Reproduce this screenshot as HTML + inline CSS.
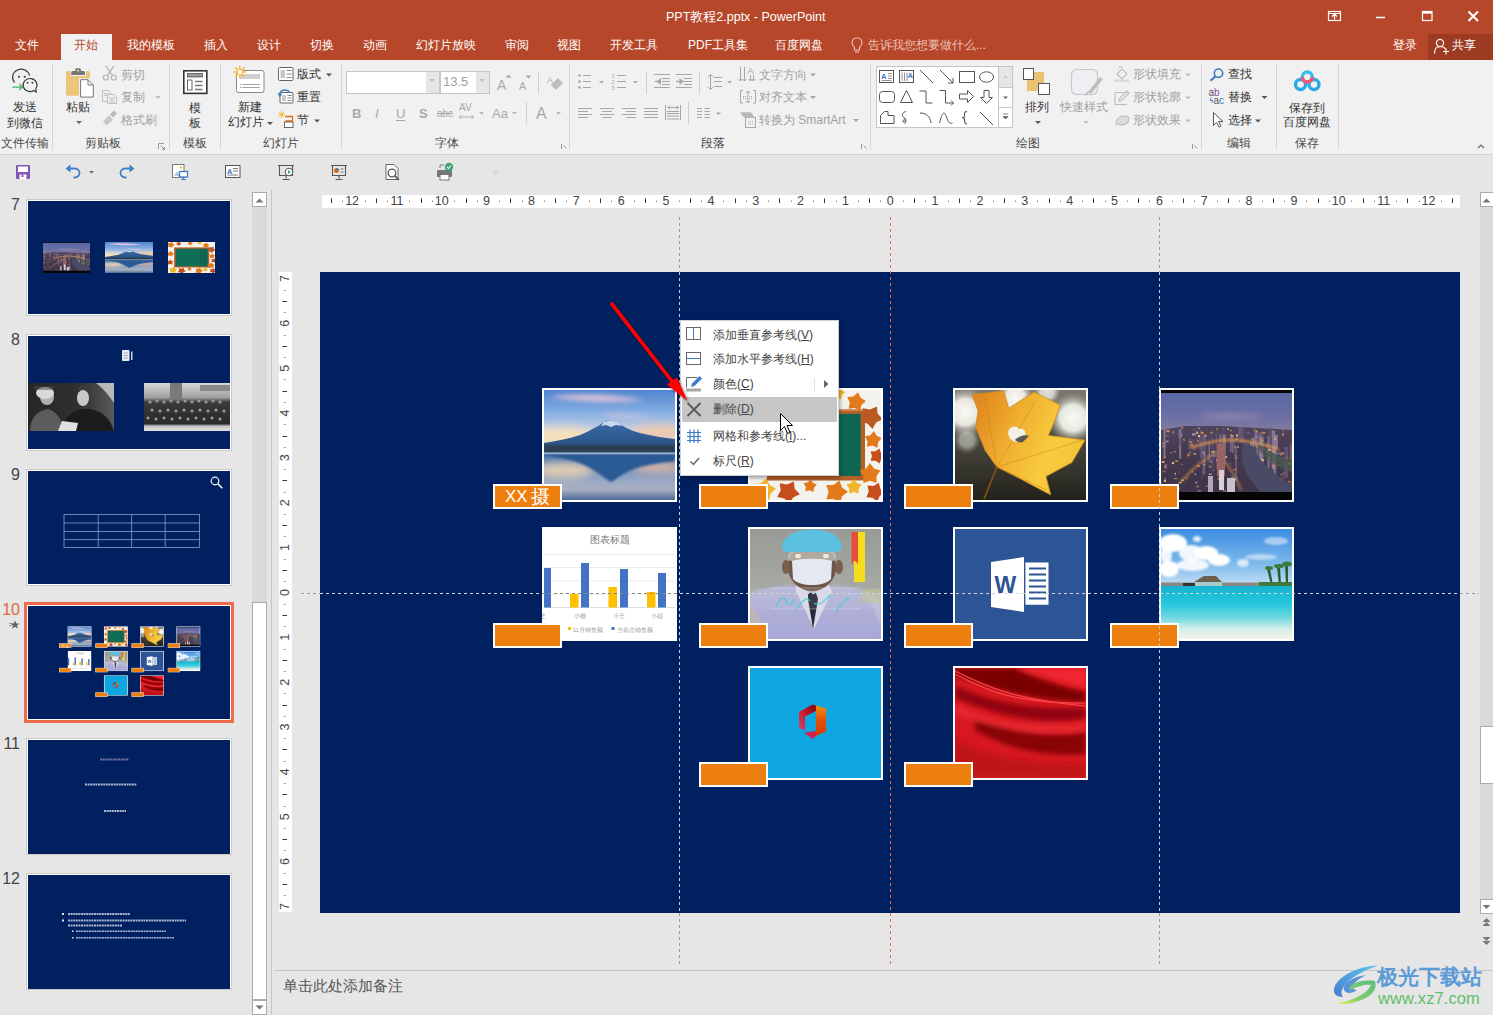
<!DOCTYPE html>
<html><head><meta charset="utf-8">
<style>
*{box-sizing:border-box}
html,body{margin:0;padding:0}
body{width:1493px;height:1015px;position:relative;overflow:hidden;background:#E6E6E6;font-family:"Liberation Sans",sans-serif;color:#333;font-size:12px}
.a{position:absolute}
.t{position:absolute;white-space:nowrap;line-height:16px;font-size:12px}
.tab{position:absolute;top:37px;line-height:16px;color:#fff;font-size:12px;white-space:nowrap}
.sep{position:absolute;top:64px;width:1px;height:86px;background:#D6D6D6}
.gl{position:absolute;top:135px;line-height:16px;color:#4A4A4A;font-size:12px;white-space:nowrap}
.dis{color:#A0A0A0}
.pic{position:absolute;width:135px;height:114px;border:2px solid #fff;overflow:hidden}
.lbl{position:absolute;width:69px;height:25px;border:2px solid #fff;background:#EE7F0E}
.thumb{position:absolute;left:26px;width:206px;height:117px;border:1px solid #C9C9C9;background:#002060;outline:none}
.thumb .in{position:absolute;left:1px;top:1px;right:1px;bottom:1px;background:#002060}
.tn{position:absolute;left:0;width:20px;text-align:right;font-size:16px;line-height:16px;color:#444}
</style></head><body>

<!-- ===== TITLE BAR ===== -->
<div class="a" style="left:0;top:0;width:1493px;height:60px;background:#B7472A"></div>
<div class="t" style="left:666px;top:9px;color:#fff;font-size:12.5px">PPT教程2.pptx - PowerPoint</div>

<!-- tabs -->
<div class="a" style="left:61px;top:34px;width:51px;height:26px;background:#F1F1F1"></div>
<div class="tab" style="left:15px">文件</div>
<div class="tab" style="left:74px;color:#B7472A">开始</div>
<div class="tab" style="left:127px">我的模板</div>
<div class="tab" style="left:204px">插入</div>
<div class="tab" style="left:257px">设计</div>
<div class="tab" style="left:310px">切换</div>
<div class="tab" style="left:363px">动画</div>
<div class="tab" style="left:416px">幻灯片放映</div>
<div class="tab" style="left:505px">审阅</div>
<div class="tab" style="left:557px">视图</div>
<div class="tab" style="left:610px">开发工具</div>
<div class="tab" style="left:688px">PDF工具集</div>
<div class="tab" style="left:775px">百度网盘</div>
<div class="tab" style="left:868px;color:#EBC3B6">告诉我您想要做什么...</div>
<div class="tab" style="left:1393px">登录</div>
<div class="a" style="left:1428px;top:34px;width:65px;height:26px;background:#9C3B22"></div>
<div class="tab" style="left:1452px">共享</div>

<!-- ===== RIBBON ===== -->
<div class="a" style="left:0;top:60px;width:1493px;height:95px;background:#F1F1F1;border-bottom:1px solid #D5D5D5"></div>


<!-- ribbon separators -->
<div class="sep" style="left:52px"></div>
<div class="sep" style="left:169px"></div>
<div class="sep" style="left:220px"></div>
<div class="sep" style="left:341px"></div>
<div class="sep" style="left:569px"></div>
<div class="sep" style="left:870px"></div>
<div class="sep" style="left:1201px"></div>
<div class="sep" style="left:1276px"></div>
<div class="sep" style="left:1338px"></div>

<!-- ribbon texts -->
<div class="t" style="left:13px;top:99px">发送</div>
<div class="t" style="left:7px;top:115px">到微信</div>
<div class="gl" style="left:1px">文件传输</div>
<div class="t" style="left:66px;top:99px">粘贴</div>
<div class="t dis" style="left:121px;top:67px">剪切</div>
<div class="t dis" style="left:121px;top:89px">复制</div>
<div class="t dis" style="left:121px;top:112px">格式刷</div>
<div class="gl" style="left:85px">剪贴板</div>
<div class="t" style="left:189px;top:100px">模</div>
<div class="t" style="left:189px;top:115px">板</div>
<div class="gl" style="left:183px">模板</div>
<div class="t" style="left:238px;top:99px">新建</div>
<div class="t" style="left:228px;top:114px">幻灯片</div>
<div class="t" style="left:297px;top:66px">版式</div>
<div class="t" style="left:297px;top:89px">重置</div>
<div class="t" style="left:297px;top:112px">节</div>
<div class="gl" style="left:263px">幻灯片</div>
<div class="gl" style="left:435px">字体</div>
<div class="t dis" style="left:759px;top:67px">文字方向</div>
<div class="t dis" style="left:759px;top:89px">对齐文本</div>
<div class="t dis" style="left:759px;top:112px">转换为 SmartArt</div>
<div class="gl" style="left:701px">段落</div>
<div class="t" style="left:1025px;top:99px">排列</div>
<div class="t dis" style="left:1060px;top:99px">快速样式</div>
<div class="t dis" style="left:1133px;top:66px">形状填充</div>
<div class="t dis" style="left:1133px;top:89px">形状轮廓</div>
<div class="t dis" style="left:1133px;top:112px">形状效果</div>
<div class="gl" style="left:1016px">绘图</div>
<div class="t" style="left:1228px;top:66px">查找</div>
<div class="t" style="left:1228px;top:89px">替换</div>
<div class="t" style="left:1228px;top:112px">选择</div>
<div class="gl" style="left:1227px">编辑</div>
<div class="t" style="left:1289px;top:100px">保存到</div>
<div class="t" style="left:1283px;top:114px">百度网盘</div>
<div class="gl" style="left:1295px">保存</div>
<!-- font boxes -->
<div class="a" style="left:346px;top:71px;width:94px;height:23px;background:#fff;border:1px solid #C6C6C6"></div>
<div class="a" style="left:426px;top:72px;width:13px;height:21px;background:#E6E6E6"></div>
<div class="a" style="left:440px;top:71px;width:50px;height:23px;background:#fff;border:1px solid #C6C6C6"></div>
<div class="a" style="left:476px;top:72px;width:13px;height:21px;background:#E6E6E6"></div>
<div class="t dis" style="left:443px;top:74px;font-size:13px">13.5</div>

<!-- ===== QAT ===== -->
<div class="a" style="left:0;top:155px;width:1493px;height:35px;background:#E6E6E6"></div>


<!-- ===== ICONS OVERLAY (title, ribbon, qat) ===== -->
<svg class="a" style="left:0;top:0" width="1493" height="190" viewBox="0 0 1493 190">
<g fill="none" stroke="#fff" stroke-width="1.2">
  <!-- ribbon display options -->
  <rect x="1328.5" y="11.5" width="12" height="9"/>
  <path d="M1328.5 13.5h12M1334.5 19.5v-5M1332 16.5l2.5-2.5 2.5 2.5"/>
  <!-- minimize -->
  <path d="M1376 17.5h9" stroke-width="1.5"/>
  <!-- maximize -->
  <rect x="1422.5" y="11.5" width="9.5" height="9"/>
  <path d="M1422.5 12.8h9.5" stroke-width="1.8"/>
  <!-- close -->
  <path d="M1468.5 11.5l9.5 9.5M1478 11.5l-9.5 9.5" stroke-width="2.1"/>
  <!-- share person -->
  <circle cx="1440" cy="43" r="3.6"/>
  <path d="M1434.5 53.5c0-5 2.5-7 5.5-7s4.5 1 5.5 2.5"/>
  <path d="M1446 48.5v6M1443 51.5h6"/>
</g>
<!-- lightbulb -->
<g fill="none" stroke="#EBC3B6" stroke-width="1.1">
  <path d="M854.5 47.5c-1.6-1.4-2.5-3-2.5-4.8a5 5 0 0 1 10 0c0 1.8-0.9 3.4-2.5 4.8v2.5h-5z"/>
  <path d="M855 52h4"/>
</g>

<!-- WeChat -->
<g fill="none" stroke="#3A3A3A" stroke-width="1.15">
  <path d="M14.6 82.6A8.6 8.2 0 1 1 29.6 75.6"/>
  <path d="M33.9 90.4A6.9 6.5 0 1 1 35.8 88.6L36.3 92.4z" stroke-linejoin="round"/>
</g>
<g fill="#3A3A3A"><circle cx="19" cy="76.8" r="1.05"/><circle cx="24.7" cy="76.8" r="1.05"/><circle cx="27.6" cy="82.8" r="0.95"/><circle cx="32.4" cy="82.8" r="0.95"/></g>
<path d="M12.3 87.1h10M19.3 84.1l3.2 3-3.2 3" fill="none" stroke="#4CAF6A" stroke-width="1.4"/>

<!-- Paste -->
<path d="M68 70.9h2.5v5.2h15.5v-5.2H88a2 2 0 0 1 2 2V95.7H68a2 2 0 0 1-2-2V72.9a2 2 0 0 1 2-2z" fill="#EBC57A"/>
<path d="M71.2 75V72.5a1.5 1.5 0 0 1 1.5-1.5h2.6v-1.5a1.2 1.2 0 0 1 1.2-1.2h3.2a1.2 1.2 0 0 1 1.2 1.2V71h2.6a1.5 1.5 0 0 1 1.5 1.5V75z" fill="#777"/>
<circle cx="78" cy="70.6" r="0.9" fill="#fff"/>
<rect x="79" y="78.2" width="16" height="20.5" fill="#F1F1F1"/>
<path d="M80.6 79.7h7.4l5.3 5.3v12.1H80.6z" fill="#fff" stroke="#777" stroke-width="1"/>
<path d="M88 79.7v5.3h5.3" fill="none" stroke="#777" stroke-width="1"/>
<path d="M76 121l3 3 3-3z" fill="#666"/>

<!-- scissors -->
<g fill="none" stroke="#BDBDBD" stroke-width="1.4">
  <circle cx="105.8" cy="77.6" r="2.5"/><circle cx="113.8" cy="77.6" r="2.5"/>
  <path d="M107.3 75.5l6.5-9.5M112.3 75.5l-6.5-9.5"/>
</g>
<!-- copy -->
<g fill="#F1F1F1" stroke="#C0C0C0" stroke-width="1">
  <path d="M102.5 90.5h6l2 2v9h-8z"/>
  <path d="M107.5 94.5h6.5l2.5 2.5v6.5h-9z"/>
  <path d="M104 93.5h4M104 95.5h3M109.5 98h5M109.5 100h5M109.5 102h5" fill="none"/>
</g>
<path d="M155 96l3 3 3-3z" fill="#C0C0C0"/>
<!-- format painter -->
<path d="M103 121.5l6-6 4 4-6 6z" fill="#C8C8C8"/>
<path d="M110 114.5l4-4 3 3-4 4z" fill="#B8B8B8"/>
<!-- launcher -->
<g fill="none" stroke="#9A9A9A" stroke-width="1"><path d="M158.5 149v-5.5h5.5M160.5 145.5l4 4M164.5 147v2.5h-2.5"/></g>

<!-- Template -->
<rect x="183.8" y="70.8" width="23" height="22.6" fill="#fff" stroke="#333" stroke-width="1.6"/>
<rect x="187.5" y="73.5" width="15" height="3.5" fill="#999" stroke="#555" stroke-width="0.8"/>
<rect x="187.5" y="80" width="4.5" height="10" fill="#fff" stroke="#555" stroke-width="0.9"/>
<path d="M195 81.5h7.5M195 85.5h7.5M195 89.5h7.5" stroke="#777" stroke-width="1.5"/>

<!-- New slide -->
<rect x="236.5" y="70.5" width="27.5" height="22" rx="2" fill="#fff" stroke="#8A8A8A" stroke-width="1"/>
<rect x="240" y="74" width="20" height="5" fill="#CFCFCF"/>
<path d="M240 84.5h20M240 87.5h20" stroke="#999" stroke-width="0.9" stroke-dasharray="1.5 1 17.5 0"/>
<g stroke="#F2C24E" stroke-width="1.5"><path d="M239.8 65.5v13M233.3 72h13M235.2 67.4l9.2 9.2M244.4 67.4l-9.2 9.2"/></g>
<circle cx="239.8" cy="72" r="2.8" fill="#fff" stroke="#F2C24E" stroke-width="1.2"/>
<path d="M267 122l3 3 3-3z" fill="#555"/>
<!-- layout -->
<rect x="278.5" y="67.5" width="14.5" height="13" rx="1" fill="#fff" stroke="#666"/>
<rect x="280.5" y="70" width="4.5" height="8" fill="#C8C8C8"/>
<path d="M286.5 70.5h5M286.5 74h5M286.5 77.5h5" stroke="#888"/>
<path d="M326 73.5l3 3 3-3z" fill="#555"/>
<!-- reset -->
<rect x="280" y="92.5" width="13" height="10.5" rx="1" fill="#fff" stroke="#666"/>
<rect x="282" y="95" width="4" height="6" fill="#C8C8C8"/>
<path d="M287.5 95.5h4M287.5 98h4M287.5 100.5h4" stroke="#888"/>
<path d="M279.5 95c.5-3.5 3-5 5.5-5 2.2 0 3.8 1 4.6 2.5" fill="none" stroke="#3F7FC8" stroke-width="1.5"/>
<path d="M277.5 93l2.2 4.2 2.8-3.2z" fill="#3F7FC8"/>
<!-- section -->
<g stroke="#F2C24E" stroke-width="1"><path d="M281.5 111v7M278 114.5h7M279 112l5 5M284 112l-5 5"/></g>
<path d="M285 116.5h7.5v4.5h-7" fill="none" stroke="#E46C0A" stroke-width="1.3"/>
<rect x="284.5" y="122" width="8.5" height="5.5" fill="#fff" stroke="#666"/>
<path d="M314 119.5l3 3 3-3z" fill="#555"/>

<!-- font group -->
<g fill="#A8A8A8" font-family="Liberation Sans" >
  <text x="497" y="90" font-size="14">A</text>
  <text x="519" y="90" font-size="11">A</text>
  <path d="M505.5 77.5l3-3 3 3z"/><path d="M525.5 75.5l3 3 3-3z"/>
</g>
<path d="M538.5 71.5v22" stroke="#CFCFCF"/>
<g fill="#BDBDBD"><path d="M551 85l7-7 5 5-7 7z"/><text x="547" y="83" font-size="9" fill="#B0B0B0" font-family="Liberation Sans">A</text></g>
<g fill="#A8A8A8" font-family="Liberation Sans" font-size="13">
  <text x="352" y="118" font-weight="bold">B</text>
  <text x="375" y="118" font-style="italic">I</text>
  <text x="396" y="118">U</text>
  <text x="419" y="118" font-weight="bold">S</text>
  <text x="437" y="117" font-size="10">abc</text>
  <text x="459" y="111" font-size="10">AV</text>
  <text x="492" y="118">Aa</text>
  <text x="536" y="119" font-size="16">A</text>
</g>
</g><path d="M396 120.5h9M437 113.5h16" stroke="#A8A8A8" stroke-width="1"/><g>
<path d="M459.5 117h14M461.5 115l-2 2 2 2M471.5 115l2 2-2 2" fill="none" stroke="#A8A8A8" stroke-width="0.9"/>
<g fill="#B5B5B5"><path d="M479 112l2.5 2.5 2.5-2.5z"/><path d="M512 112l2.5 2.5 2.5-2.5z"/><path d="M556 112l2.5 2.5 2.5-2.5z"/></g>
<path d="M526.5 102v22" stroke="#CFCFCF"/>
<g fill="#C0C0C0"><path d="M429 79l3 3 3-3z"/><path d="M479 79l3 3 3-3z"/></g>
<g fill="none" stroke="#9A9A9A" stroke-width="1"><path d="M561.5 149v-5M563.5 145.5l3 3"/><path d="M861.5 149v-5M863.5 145.5l3 3"/><path d="M1192.5 149v-5M1194.5 145.5l3 3"/></g>

<!-- paragraph group -->
<g stroke="#A6A6A6" stroke-width="1" fill="none">
  <path d="M583 75.5h8M583 81.5h8M583 87.5h8"/>
  <path d="M617 75.5h9M617 81.5h9M617 87.5h9"/>
  <path d="M654 74.5h16M662 78.5h8M662 81.5h8M662 84.5h8M654 87.5h16"/>
  <path d="M676 74.5h16M684 78.5h8M684 81.5h8M684 84.5h8M676 87.5h16"/>
  <path d="M710.5 74.5v15M708 77l2.5-2.5 2.5 2.5M708 87l2.5 2.5 2.5-2.5M714 77.5h8M714 81.5h8M714 86.5h8"/>
  <path d="M578 108.5h14M578 111.5h10M578 114.5h14M578 117.5h10"/>
  <path d="M600 108.5h14M602 111.5h10M600 114.5h14M602 117.5h10"/>
  <path d="M622 108.5h14M626 111.5h10M622 114.5h14M626 117.5h10"/>
  <path d="M644 108.5h14M644 111.5h14M644 114.5h14M644 117.5h14"/>
  <path d="M665.5 105v15M680.5 105v15M668 107.5h10.5M670 105.5l-2 2 2 2M676.5 105.5l2 2-2 2M667 111.5h12M667 113.5h12M667 116h12M667 119h12"/>
  <path d="M697 108.5h5M697 111.5h5M697 114.5h5M697 117.5h5M704.5 108.5h5.5M704.5 111.5h5.5M704.5 114.5h5.5M704.5 117.5h5.5"/>
  <path d="M740.5 67v14M744.5 67v14M738.5 79l2 2 2-2M742.5 79l2 2 2-2M750.5 75v6M753.5 75v6M748.5 79l2 2 2-2M751.5 79l2 2 2-2"/>
  <path d="M743 90.5h-2.5v12.5h2.5M753 90.5h2.5v12.5h-2.5M748 91v5M746 93l2-2 2 2M748 98v5M746 101l2 2 2-2"/>
  <path d="M743 96.5h10M743 98.5h10" stroke-dasharray="1 1"/>
  <rect x="745.5" y="117.5" width="10" height="10" fill="#F1F1F1"/>
  <path d="M748 121.5h5M748 124h5" stroke-dasharray="1 1"/>
</g>
<g fill="#A6A6A6">
  <circle cx="579.5" cy="75.5" r="1.3"/><circle cx="579.5" cy="81.5" r="1.3"/><circle cx="579.5" cy="87.5" r="1.3"/>
  <text x="611.5" y="77.5" font-size="5.5" font-family="Liberation Sans">1</text><text x="611.5" y="83.5" font-size="5.5" font-family="Liberation Sans">2</text><text x="611.5" y="89.5" font-size="5.5" font-family="Liberation Sans">3</text>
  <path d="M661 78l-4.5 3.5 4.5 3.5z"/><path d="M655 80.8h5v1.4h-5z"/>
  <path d="M679.5 78l4.5 3.5-4.5 3.5z"/><path d="M676 80.8h4v1.4h-4z"/>
  <text x="747.5" y="74" font-size="9" font-family="Liberation Sans">A</text>
  <path d="M740 112.3h11l4 5.5h-11z" fill="#B8B8B8"/>
  <path d="M599 81l2.5 2.5 2.5-2.5z"/><path d="M633 81l2.5 2.5 2.5-2.5z"/><path d="M727 81l2.5 2.5 2.5-2.5z"/><path d="M716 112.5l2.5 2.5 2.5-2.5z"/>
  <path d="M810 73.5l3 3 3-3z"/><path d="M810 96l3 3 3-3z"/><path d="M853 119l3 3 3-3z"/>
</g>
<path d="M646.5 71.5v22M699.5 71.5v22M688.5 102v22" stroke="#CFCFCF"/>

<!-- drawing gallery -->
<rect x="876.5" y="66.5" width="136" height="61" fill="#fff" stroke="#C6C6C6"/>
<rect x="998.5" y="66.5" width="14" height="21" fill="#E6E6E6" stroke="#C6C6C6"/>
<rect x="998.5" y="87.5" width="14" height="20" fill="#fff" stroke="#C6C6C6"/>
<rect x="998.5" y="107.5" width="14" height="20" fill="#fff" stroke="#C6C6C6"/>
<path d="M1003 78l2.5-2.5 2.5 2.5z" fill="#C6C6C6"/>
<path d="M1003 96.5l2.5 2.5 2.5-2.5z" fill="#666"/>
<path d="M1003 116.5l2.5 2.5 2.5-2.5zM1003 114h5" fill="#666" stroke="#666" stroke-width="0.8"/>
<g fill="none" stroke="#555" stroke-width="1">
  <rect x="879.5" y="70.5" width="14" height="12"/><path d="M888 73.5h4M888 76h4M888 78.5h4M881.5 80.5h10" stroke="#777" stroke-width="0.8"/>
  <rect x="899.5" y="70.5" width="14" height="12"/><path d="M902 72.5v8.5M904.5 72.5v8.5M907 72.5v8.5" stroke="#777" stroke-width="0.8"/>
  <path d="M920 70l13 13"/>
  <path d="M940 70l13 13M948 83h5v-5"/>
  <rect x="959.5" y="71.5" width="15" height="11"/>
  <ellipse cx="986.5" cy="77" rx="7" ry="5.2"/>
  <rect x="879.5" y="91.5" width="15" height="11" rx="3"/>
  <path d="M906.5 90.5l-6 12h12z"/>
  <path d="M919.5 91h6.5v12h6.5"/>
  <path d="M939.5 90.5h6v12.5h8M951 100.5l2.5 2.5-2.5 2.5"/>
  <path d="M959.5 94h8v-3.5l6 6-6 6v-3.5h-8z"/>
  <path d="M984 90.5h5v7h3.5l-6 6-6-6h3.5z"/>
  <path d="M880.5 123.5v-8l4-4h3.5v4h6v8z" stroke-linejoin="round"/>
  <path d="M906 111.5c-4 1-5 4-2 6 3 2 1 4-1 4.5M903 122c0-3 3-4 3-1.5s-2 3-1 3.5"/>
  <path d="M920 113c6 0 10 3 11 10"/>
  <path d="M939.5 123c3-12 5-12 7-6s3 7 6 6"/>
  <path d="M967 111.5c-2.5 0-2.5 1.5-2.5 4s-1 2-2.5 2c1.5 0 2.5.5 2.5 2.5s0 4 2.5 4" stroke-width="1.1"/>
  <path d="M980 112l13 13"/>
</g>
<text x="881" y="78.5" font-size="7.5" font-weight="bold" fill="#3D7BC5" font-family="Liberation Sans">A</text>
<text x="907.5" y="77.5" font-size="7.5" font-weight="bold" fill="#3D7BC5" font-family="Liberation Sans">A</text>
<!-- arrange -->
<rect x="1027" y="72" width="17" height="19" fill="#EBC274"/>
<rect x="1023.5" y="68.5" width="10" height="11" fill="#fff" stroke="#555"/>
<rect x="1038.5" y="83.5" width="11" height="11" fill="#fff" stroke="#555"/>
<path d="M1035 121l3 3 3-3z" fill="#555"/>
<!-- quick styles -->
<rect x="1071.5" y="69.5" width="26" height="25" rx="5" fill="#F1EEF3" stroke="#C8C8C8" stroke-width="1.2"/>
<path d="M1088 92l12-15 3 2-12 15z" fill="#BDBDBD"/><path d="M1085 96c0-3 2-5 5-4z" fill="#BDBDBD"/>
<path d="M1083 121l3 3 3-3z" fill="#C0C0C0"/>
<!-- shape fill/outline/effects -->
<g fill="none" stroke="#BDBDBD" stroke-width="1.1">
  <path d="M1117 74l5-5 5 5-5 5z"/><path d="M1119 68c0-2 3-2 3 0"/>
  <path d="M1128 92.5h-13v12h12"/><path d="M1119 101l1-3 7-7 2 2-7 7z"/>
  <path d="M1116 124c0-6 3-8 9-8 3 0 4 1 4 3 0 4-4 6-8 6z" fill="#DADADA"/>
</g>
<rect x="1114" y="79.5" width="15" height="2.5" fill="#DADADA"/>
<g fill="#C0C0C0"><path d="M1185 73.5l3 3 3-3z"/><path d="M1185 96.5l3 3 3-3z"/><path d="M1185 119.5l3 3 3-3z"/></g>
<!-- find / replace / select -->
<circle cx="1218.5" cy="73.2" r="4.2" fill="none" stroke="#3D7BC5" stroke-width="1.6"/>
<path d="M1215.5 76.3l-5 4.5" stroke="#3D7BC5" stroke-width="2.2"/>
<text x="1208.5" y="96" font-size="10" font-family="Liberation Sans"><tspan fill="#555">a</tspan><tspan fill="#8A4FB0">b</tspan></text>
<text x="1213.5" y="104" font-size="10" font-family="Liberation Sans"><tspan fill="#555">a</tspan><tspan fill="#3D7BC5">c</tspan></text>
<path d="M1211.5 97.5l-1.5 3h3l-1.5 2.5" fill="none" stroke="#3D7BC5" stroke-width="0.9"/>
<path d="M1261.5 96l3 3 3-3z" fill="#555"/>
<path d="M1213.5 112.5v13l3-3 2.5 4.5 2-1-2.5-4.5h4.5z" fill="#fff" stroke="#555" stroke-width="1"/>
<path d="M1255 119.5l3 3 3-3z" fill="#555"/>
<!-- baidu -->
<g fill="none" stroke-width="3.4">
  <circle cx="1300.5" cy="84.5" r="5" stroke="#2AA8E8"/>
  <circle cx="1314" cy="84.5" r="5" stroke="#2AA8E8"/>
  <circle cx="1307.3" cy="77" r="5" stroke="#3ABCEC"/>
  <path d="M1302.3 77a5 5 0 0 0 10 0" stroke="#EE5A70"/>
</g>
<path d="M1478 148l3-3 3 3" fill="none" stroke="#666" stroke-width="1.2"/>

<!-- QAT -->
<rect x="16" y="165" width="14" height="14" rx="1" fill="#8456B8"/>
<rect x="18" y="166.5" width="10" height="5.5" fill="#fff"/>
<rect x="19.5" y="174.5" width="7" height="4.5" fill="#fff"/>
<rect x="21.5" y="174.5" width="2" height="2.5" fill="#8456B8"/>
<path d="M68 168.5h7a4.5 4.5 0 0 1 0 9h-1.5" fill="none" stroke="#3F7FC8" stroke-width="1.8"/>
<path d="M65.5 168.5l5-4v8z" fill="#3F7FC8"/>
<path d="M89 171l2.5 2.5 2.5-2.5z" fill="#666"/>
<path d="M132 168.5h-7a4.5 4.5 0 0 0 0 9h1.5" fill="none" stroke="#3F7FC8" stroke-width="1.8"/>
<path d="M134.5 168.5l-5-4v8z" fill="#3F7FC8"/>
<!-- qat icon4 -->
<rect x="172.5" y="164.5" width="11.5" height="13" fill="#fff" stroke="#777"/>
<path d="M174 176l3-5 3 5z" fill="#B8C8DC"/><circle cx="181" cy="167.5" r="1.3" fill="#F2C24E"/>
<rect x="179.5" y="171.5" width="8" height="5.5" fill="#fff" stroke="#3F7FC8" stroke-width="1.3"/>
<path d="M183.5 177v2M181 179.5h5" stroke="#3F7FC8" stroke-width="1.2"/>
<!-- qat icon5 -->
<rect x="225.5" y="165.5" width="14.5" height="12" fill="#fff" stroke="#555"/>
<text x="227" y="173.5" font-size="7.5" font-weight="bold" fill="#3D7BC5" font-family="Liberation Sans">A</text>
<path d="M233 168.5h5M233 171h5M227.5 175h10.5" stroke="#777"/>
<!-- qat icon6 -->
<path d="M278 165.5h16M279.5 165.5v10h13v-10M286 175.5v3M282.5 179.5h7" fill="none" stroke="#555" stroke-width="1.1"/>
<circle cx="289" cy="172" r="3.8" fill="#fff" stroke="#555"/>
<path d="M288 170v4l3-2z" fill="#3FA36B"/>
<!-- qat icon7 -->
<path d="M331 165.5h16M332.5 165.5v10h13v-10M339 175.5v3M335.5 179.5h7" fill="none" stroke="#555" stroke-width="1.1"/>
<circle cx="336.5" cy="170.5" r="2.5" fill="#E46C0A"/><path d="M336.5 170.5v-2.5a2.5 2.5 0 0 1 2.5 2.5z" fill="#3D7BC5"/>
<path d="M340.5 169h3M340.5 172h3" stroke="#777"/>
<!-- qat icon8 -->
<path d="M386 164.5h8l4 4v11h-12z" fill="#fff" stroke="#666"/>
<circle cx="392" cy="173" r="3.8" fill="#fff" stroke="#555" stroke-width="1.3"/>
<path d="M394.8 175.8l4 4" stroke="#555" stroke-width="1.8"/>
<!-- qat icon9 -->
<rect x="437" y="170" width="15" height="7" rx="1" fill="#777"/>
<rect x="440" y="174.5" width="9" height="5.5" fill="#fff" stroke="#777"/>
<path d="M440 168v-3h4" fill="none" stroke="#777"/>
<circle cx="449" cy="167" r="4.2" fill="#3FA36B"/>
<path d="M447 167l1.5 1.5 2.5-3" fill="none" stroke="#fff" stroke-width="1.1"/>
<path d="M492.5 170.5h6M493 172.5l2.5 2.5 2.5-2.5z" fill="#D0D0D0" stroke="#D0D0D0" stroke-width="0.8"/>
</svg>

<!-- ===== LEFT PANEL ===== -->
<div class="a" style="left:252px;top:192px;width:15px;height:823px;background:#DADADA"></div>
<div class="a" style="left:252px;top:192px;width:15px;height:15px;background:#fff;border:1px solid #ABABAB"></div>
<div class="a" style="left:252px;top:602px;width:15px;height:398px;background:#fff;border:1px solid #ABABAB"></div>
<div class="a" style="left:252px;top:1000px;width:15px;height:15px;background:#fff;border:1px solid #ABABAB"></div>
<div class="a" style="left:271px;top:190px;width:1px;height:825px;background:#C6C6C6"></div>

<!-- thumbnails -->
<div class="a" style="left:26px;top:199px;width:206px;height:117px;background:#fff;border:1px solid #CACACA"></div>
<div class="a" style="left:26px;top:334px;width:206px;height:117px;background:#fff;border:1px solid #CACACA"></div>
<div class="a" style="left:26px;top:469px;width:206px;height:117px;background:#fff;border:1px solid #CACACA"></div>
<div class="a" style="left:24px;top:602px;width:210px;height:121px;background:#fff;border:3px solid #EE6C4A"></div>
<div class="a" style="left:26px;top:738px;width:206px;height:117px;background:#fff;border:1px solid #CACACA"></div>
<div class="a" style="left:26px;top:873px;width:206px;height:117px;background:#fff;border:1px solid #CACACA"></div>
<div class="tn" style="top:197px">7</div>
<div class="tn" style="top:332px">8</div>
<div class="tn" style="top:467px">9</div>
<div class="tn" style="top:602px;color:#E0673F">10</div>
<div class="tn" style="top:736px">11</div>
<div class="tn" style="top:871px">12</div>
<svg class="a" style="left:0;top:0" width="271" height="1015" viewBox="0 0 271 1015">
  <path d="M15 620.5l1.4 3h3.2l-2.6 2 1 3.2-3-1.9-3 1.9 1-3.2-2.6-2h3.2z" fill="#666"/>
  <path d="M9.5 623.5h2M9.5 625.5h2" stroke="#666" stroke-width="0.8"/>
  <!-- 7 -->
  <rect x="28" y="201" width="202" height="113" fill="#002060"/>
  <use href="#city" x="43" y="242" width="47" height="31"/>
  <use href="#fuji" x="105" y="242" width="48" height="31"/>
  <use href="#autumn" x="168" y="242" width="47" height="31"/>
  <!-- 8 -->
  <rect x="28" y="336" width="202" height="113" fill="#002060"/>
  <rect x="122" y="350" width="7.5" height="11" rx="1" fill="#E8ECF4"/>
  <path d="M123.5 353h4.5M123.5 355.5h4.5M123.5 358h4.5" stroke="#8A94B0" stroke-width="0.7"/>
  <rect x="131" y="351.5" width="1.5" height="8.5" fill="#C8D0E0"/>
  <defs>
    <linearGradient id="gEin" x1="0" y1="0" x2="1" y2="0"><stop offset="0" stop-color="#262626"/><stop offset="0.6" stop-color="#303030"/><stop offset="1" stop-color="#5A5A5A"/></linearGradient>
    <linearGradient id="gSol" x1="0" y1="0" x2="0" y2="1"><stop offset="0" stop-color="#D8D8D8"/><stop offset="0.3" stop-color="#A0A0A0"/><stop offset="0.4" stop-color="#3A3A3A"/><stop offset="0.85" stop-color="#2A2A2A"/><stop offset="0.9" stop-color="#C8C8C8"/><stop offset="1" stop-color="#E0E0E0"/></linearGradient>
  </defs>
  <rect x="28" y="383" width="86" height="48" fill="url(#gEin)"/>
  <g filter="url(#b05)">
  <path d="M96 383h18v20c-4-6-10-14-18-20z" fill="#B8B8B8"/>
  <path d="M30 431c0-12 6-20 18-22 8 2 14 10 16 22z" fill="#5C5C5C"/>
  <ellipse cx="47" cy="397" rx="7" ry="8" fill="#B0B0B0"/>
  <ellipse cx="45" cy="393" rx="9" ry="6" fill="#D8D8D8"/>
  <path d="M62 431c2-14 10-22 24-22s24 8 28 22z" fill="#1C1C1C"/>
  <ellipse cx="83" cy="398" rx="6" ry="8" fill="#C8C8C8"/>
  <path d="M77 390c2-6 12-6 14 0z" fill="#3A3A3A"/>
  <path d="M58 431l4-10 16 2-2 8z" fill="#E0E0E0"/>
  <rect x="34" y="386" width="20" height="4" fill="#484848" opacity="0.5"/>
  </g>
  <rect x="144" y="383" width="86" height="48" fill="url(#gSol)"/>
  <g filter="url(#b05)">
  <rect x="170" y="383" width="12" height="16" fill="#7A7A7A"/><rect x="200" y="385" width="30" height="6" fill="#8A8A8A"/>
  <g fill="#9A9A9A"><circle cx="150" cy="402" r="1.6"/><circle cx="157" cy="401" r="1.6"/><circle cx="164" cy="402" r="1.6"/><circle cx="171" cy="401" r="1.6"/><circle cx="178" cy="402" r="1.6"/><circle cx="185" cy="401" r="1.6"/><circle cx="192" cy="402" r="1.6"/><circle cx="199" cy="401" r="1.6"/><circle cx="206" cy="402" r="1.6"/><circle cx="213" cy="401" r="1.6"/><circle cx="220" cy="402" r="1.6"/>
  <circle cx="152" cy="410" r="1.6"/><circle cx="160" cy="411" r="1.6"/><circle cx="168" cy="410" r="1.6"/><circle cx="176" cy="411" r="1.6"/><circle cx="184" cy="410" r="1.6"/><circle cx="192" cy="411" r="1.6"/><circle cx="200" cy="410" r="1.6"/><circle cx="208" cy="411" r="1.6"/><circle cx="216" cy="410" r="1.6"/><circle cx="224" cy="411" r="1.6"/>
  <circle cx="148" cy="418" r="1.5"/><circle cx="156" cy="419" r="1.5"/><circle cx="164" cy="418" r="1.5"/><circle cx="172" cy="419" r="1.5"/><circle cx="180" cy="418" r="1.5"/><circle cx="188" cy="419" r="1.5"/><circle cx="196" cy="418" r="1.5"/><circle cx="204" cy="419" r="1.5"/><circle cx="212" cy="418" r="1.5"/><circle cx="220" cy="419" r="1.5"/></g>
  </g>
  <!-- 9 -->
  <rect x="28" y="471" width="202" height="113" fill="#002060"/>
  <g fill="none" stroke="#8C9CC4" stroke-width="0.8">
    <rect x="64" y="514.5" width="135.5" height="33"/>
    <path d="M98.2 514.5v33M131.6 514.5v33M165.2 514.5v33M64 523h135.5M64 531.5h135.5M64 539.6h135.5"/>
  </g>
  <circle cx="215" cy="481" r="3.8" fill="none" stroke="#fff" stroke-width="1.2"/>
  <path d="M217.8 483.8l4.5 4.5" stroke="#fff" stroke-width="1.6"/>
  <!-- 10 -->
  <rect x="28" y="606" width="202" height="113" fill="#002060"/>
  <use href="#slide10" x="28" y="606" width="202" height="113"/>
  <!-- 11 -->
  <rect x="28" y="740" width="202" height="114" fill="#002060"/>
  <g stroke-dasharray="2 0.6" stroke-width="2.2" opacity="0.85">
  <path d="M100 759.5h29" stroke="#8A7FA8"/>
  <path d="M85 784.5h52" stroke="#C8D0E4" stroke-width="1.8"/>
  <path d="M104 811h22" stroke="#C8D0E4" stroke-width="1.8"/>
  </g>
  <rect x="28" y="875" width="202" height="114" fill="#002060"/>
  <g fill="#E0E6F0"><rect x="62" y="913" width="2" height="2"/><rect x="62" y="919.5" width="2" height="2"/><rect x="72" y="930.5" width="1.5" height="1.5"/><rect x="72" y="937" width="1.5" height="1.5"/></g>
  <g stroke="#C8D0E4" stroke-dasharray="2 0.6" opacity="0.85">
    <path d="M68 914h62M68 920.5h118M68 925.5h54" stroke-width="2"/>
    <path d="M76 931.2h90M76 937.7h98" stroke-width="1.5"/>
  </g>
</svg>

<!-- ===== RULERS ===== -->
<div class="a" style="left:322px;top:195px;width:1138px;height:13px;background:#fff"></div>
<div class="a" style="left:279px;top:272px;width:13px;height:640px;background:#fff"></div>

<!-- ===== SLIDE ===== -->
<svg width="0" height="0" style="position:absolute">
<defs>
<filter id="b1" x="-50%" y="-50%" width="200%" height="200%"><feGaussianBlur stdDeviation="1"/></filter>
<filter id="b2" x="-50%" y="-50%" width="200%" height="200%"><feGaussianBlur stdDeviation="2.5"/></filter>
<filter id="b4" x="-50%" y="-50%" width="200%" height="200%"><feGaussianBlur stdDeviation="4.5"/></filter>
<filter id="b05"><feGaussianBlur stdDeviation="0.5"/></filter>
<linearGradient id="gFujiSky" x1="0" y1="0" x2="0" y2="1">
  <stop offset="0" stop-color="#4F85D0"/><stop offset="0.35" stop-color="#86AEE2"/><stop offset="0.65" stop-color="#C8D2E6"/><stop offset="0.85" stop-color="#EED4C6"/><stop offset="1" stop-color="#F0CDB4"/>
</linearGradient>
<linearGradient id="gFujiWater" x1="0" y1="0" x2="0" y2="1">
  <stop offset="0" stop-color="#3A64A0"/><stop offset="0.3" stop-color="#6A8EC0"/><stop offset="0.6" stop-color="#98A8C4"/><stop offset="0.78" stop-color="#A8B0C0"/><stop offset="1" stop-color="#4E6A98"/>
</linearGradient>
<linearGradient id="gFujiMt" x1="0" y1="0" x2="0" y2="1">
  <stop offset="0" stop-color="#3C6CA8"/><stop offset="1" stop-color="#244C80"/>
</linearGradient>
<radialGradient id="gBokeh" cx="0.5" cy="0.5" r="0.5">
  <stop offset="0" stop-color="#FAFAF4"/><stop offset="0.5" stop-color="#E8E8E0"/><stop offset="1" stop-color="#A0A098" stop-opacity="0"/>
</radialGradient>
<linearGradient id="gLeaf" x1="0" y1="0.3" x2="1" y2="0.7">
  <stop offset="0" stop-color="#E28A20"/><stop offset="0.35" stop-color="#F0B030"/><stop offset="0.7" stop-color="#F8CC3E"/><stop offset="1" stop-color="#F2C036"/>
</linearGradient>
<linearGradient id="gLeafBg" x1="0" y1="0" x2="0" y2="1">
  <stop offset="0" stop-color="#7A786C"/><stop offset="0.45" stop-color="#4A483E"/><stop offset="1" stop-color="#22221C"/>
</linearGradient>
<linearGradient id="gCity" x1="0" y1="0" x2="0" y2="1">
  <stop offset="0" stop-color="#5866A6"/><stop offset="0.25" stop-color="#6C70A4"/><stop offset="0.4" stop-color="#8A7E9E"/><stop offset="0.55" stop-color="#5E506E"/><stop offset="1" stop-color="#3C3448"/>
</linearGradient>
<linearGradient id="gBeachSky" x1="0" y1="0" x2="0" y2="1">
  <stop offset="0" stop-color="#3B8CE0"/><stop offset="0.6" stop-color="#7CB8EC"/><stop offset="1" stop-color="#C4E0F4"/>
</linearGradient>
<linearGradient id="gBeachSea" x1="0" y1="0" x2="0" y2="1">
  <stop offset="0" stop-color="#14B4D0"/><stop offset="0.35" stop-color="#28C8DC"/><stop offset="0.6" stop-color="#70D8E0"/><stop offset="0.8" stop-color="#D0EEE8"/><stop offset="1" stop-color="#F4F4EC"/>
</linearGradient>
<linearGradient id="gDoc" x1="0" y1="0" x2="0" y2="1">
  <stop offset="0" stop-color="#989A96"/><stop offset="0.5" stop-color="#A6A8A4"/><stop offset="1" stop-color="#A8AAB0"/>
</linearGradient>
<linearGradient id="gCoat" x1="0" y1="0" x2="0" y2="1">
  <stop offset="0" stop-color="#B4B4D4"/><stop offset="1" stop-color="#A8A8D8"/>
</linearGradient>
<linearGradient id="gOffR" x1="0" y1="0" x2="0" y2="1">
  <stop offset="0" stop-color="#F09010"/><stop offset="0.5" stop-color="#E05008"/><stop offset="1" stop-color="#D83A08"/>
</linearGradient>
<linearGradient id="gOffL" x1="1" y1="0" x2="0" y2="1">
  <stop offset="0" stop-color="#7A0A10"/><stop offset="0.5" stop-color="#C81828"/><stop offset="1" stop-color="#D04878"/>
</linearGradient>

<symbol id="fuji" viewBox="0 0 131 110" preserveAspectRatio="none">
  <rect width="131" height="64" fill="url(#gFujiSky)"/>
  <g filter="url(#b4)">
    <ellipse cx="18" cy="46" rx="34" ry="9" fill="#F6E2B8" opacity="0.95"/>
    <ellipse cx="114" cy="42" rx="28" ry="7" fill="#F2C8A8" opacity="0.95"/>
  </g>
  <g filter="url(#b2)">
  <path d="M5 7c30-4 60-3 95 3-30 3-65 2-95-3z" fill="#E8C8DC" opacity="0.9"/>
  <path d="M55 25c15-2 35-1 55 2-20 1-40 0-55-2z" fill="#ECCCE0" opacity="0.8"/>
  </g>
  <path d="M0 53C12 51 24 49 36 45C46 41 56 35 62 31L67 30.5L72 32C80 37 88 41 96 43C108 46 120 48 131 49V62H0z" fill="url(#gFujiMt)"/>
  <path d="M60 32L67 30.5L74 32.5L78 36L72 35L67 37L62 35L57 36z" fill="#C8D8EC" filter="url(#b05)"/>
  <rect y="62" width="131" height="48" fill="url(#gFujiWater)"/>
  <g filter="url(#b4)">
    <ellipse cx="20" cy="80" rx="30" ry="8" fill="#EAD2B0" opacity="0.9"/>
    <ellipse cx="114" cy="77" rx="26" ry="6" fill="#EAB8A0" opacity="0.85"/>
  </g>
  <path d="M0 65C12 67 24 69 36 73C46 77 56 84 62 89L67 92L72 89C80 83 88 79 96 77C108 74 120 72 131 71V64H0z" fill="#2C5A94" filter="url(#b1)"/>
  <rect y="55" width="131" height="7" fill="#2E3E50" filter="url(#b1)"/>
  <rect y="62.5" width="131" height="1.8" fill="#9AB2CA" filter="url(#b05)"/>
</symbol>

<symbol id="autumn" viewBox="0 0 131 110" preserveAspectRatio="none">
  <rect width="131" height="110" fill="#F4F2EC"/>
  <rect x="17" y="19.5" width="98" height="71" fill="#B2602A"/>
  <rect x="17" y="19.5" width="98" height="1.6" fill="#D08048"/>
  <rect x="21.5" y="24" width="89" height="62" fill="#0F6E58"/>
  <rect x="90" y="24" width="20.5" height="62" fill="#0C604C" opacity="0.6"/>
  <g filter="url(#b05)"><path d="M108.0 2.2 L110.6 7.8 L115.9 10.9 L111.4 15.0 L110.2 21.1 L104.8 18.1 L98.6 18.8 L99.8 12.7 L97.3 7.1 L103.4 6.4z" fill="#E27A1E"/><path d="M126.8 16.5 L127.7 23.8 L132.8 29.2 L126.1 32.4 L122.5 38.9 L117.4 33.5 L110.2 32.1 L113.7 25.6 L112.8 18.3 L120.0 19.6z" fill="#B85A20"/><path d="M123.9 41.0 L126.7 45.8 L131.8 48.1 L128.1 52.2 L127.5 57.8 L122.4 55.6 L117.0 56.7 L117.5 51.2 L114.8 46.4 L120.2 45.2z" fill="#E27A1E"/><path d="M129.4 58.4 L131.0 63.0 L135.0 65.9 L131.1 68.9 L129.6 73.6 L125.5 70.7 L120.6 70.8 L122.0 66.1 L120.5 61.4 L125.4 61.3z" fill="#C4501A"/><path d="M120.0 73.0 L124.0 78.5 L130.5 80.6 L126.5 86.1 L126.5 92.9 L120.0 90.8 L113.5 92.9 L113.5 86.1 L109.5 80.6 L116.0 78.5z" fill="#E27A1E"/><path d="M128.9 92.8 L130.3 98.8 L135.0 102.9 L129.7 106.1 L127.3 111.7 L122.6 107.7 L116.4 107.2 L118.8 101.5 L117.4 95.5 L123.6 96.0z" fill="#C4501A"/><path d="M16.4 88.2 L19.5 95.0 L25.9 98.6 L20.5 103.7 L19.0 110.9 L12.5 107.3 L5.2 108.1 L6.6 100.8 L3.6 94.1 L10.9 93.2z" fill="#F2B42A"/><path d="M43.8 91.5 L44.7 98.8 L49.8 104.2 L43.1 107.4 L39.5 113.9 L34.4 108.5 L27.2 107.1 L30.7 100.6 L29.8 93.3 L37.0 94.6z" fill="#C4501A"/><path d="M60.7 89.0 L62.9 92.8 L66.8 94.5 L64.0 97.7 L63.5 102.0 L59.6 100.3 L55.3 101.2 L55.8 96.9 L53.6 93.2 L57.8 92.3z" fill="#E27A1E"/><path d="M89.5 90.5 L92.0 97.5 L98.0 101.8 L92.1 106.3 L89.9 113.4 L83.8 109.1 L76.4 109.2 L78.6 102.1 L76.2 95.1 L83.6 95.0z" fill="#E27A1E"/><path d="M104.0 89.0 L106.9 93.0 L111.6 94.5 L108.7 98.5 L108.7 103.5 L104.0 102.0 L99.3 103.5 L99.3 98.5 L96.4 94.5 L101.1 93.0z" fill="#F2B42A"/><path d="M11.3 -0.5 L13.5 5.9 L19.0 9.8 L13.6 13.9 L11.5 20.4 L6.0 16.5 L-0.8 16.6 L1.2 10.1 L-1.0 3.7 L5.8 3.5z" fill="#E27A1E"/><path d="M30.8 -2.0 L33.3 2.3 L37.8 4.3 L34.5 8.0 L34.0 12.9 L29.5 10.9 L24.7 12.0 L25.2 7.1 L22.7 2.8 L27.5 1.7z" fill="#C4501A"/><path d="M65.1 -2.4 L66.2 2.4 L70.0 5.7 L65.7 8.2 L63.8 12.8 L60.1 9.6 L55.1 9.1 L57.1 4.6 L56.0 -0.2 L60.9 0.2z" fill="#E27A1E"/><path d="M89.4 -3.9 L91.2 0.1 L95.0 2.2 L91.8 5.1 L90.9 9.4 L87.1 7.3 L82.8 7.7 L83.7 3.5 L81.9 -0.4 L86.2 -0.9z" fill="#F2B42A"/><path d="M9.0 32.2 L11.6 37.8 L16.9 40.9 L12.4 45.0 L11.2 51.1 L5.8 48.1 L-0.4 48.8 L0.8 42.7 L-1.7 37.1 L4.4 36.4z" fill="#E27A1E"/><path d="M6.0 62.0 L9.6 67.0 L15.5 68.9 L11.9 73.9 L11.9 80.1 L6.0 78.2 L0.1 80.1 L0.1 73.9 L-3.5 68.9 L2.4 67.0z" fill="#C4501A"/></g>
</symbol>

<symbol id="leaf" viewBox="0 0 131 110" preserveAspectRatio="none">
  <rect width="131" height="110" fill="url(#gLeafBg)"/>
  <circle cx="10" cy="22" r="26" fill="url(#gBokeh)"/>
  <circle cx="60" cy="8" r="20" fill="url(#gBokeh)"/>
  <circle cx="118" cy="28" r="26" fill="url(#gBokeh)"/>
  <circle cx="92" cy="2" r="14" fill="url(#gBokeh)" opacity="0.8"/>
  <circle cx="12" cy="50" r="14" fill="url(#gBokeh)" opacity="0.5"/>
  <path d="M29 109L42 77" stroke="#8A5418" stroke-width="1.6"/>
  <path d="M17 4.5L49 1L53.6 18.4L79 2L105 15L100 30L93.5 45.4L130 50L117 72.4L91 86.4L95.8 105L65.3 88.8L41.9 77L30.2 60.6L20.8 37.2L23 20.8z" fill="url(#gLeaf)" stroke="#D08A1A" stroke-width="0.8" filter="url(#b05)"/>
  <path d="M42 77L30 8M42 77L80 12M42 77L128 50M42 77L92 100" stroke="#C07818" stroke-width="0.6" fill="none" opacity="0.7"/>
  <path d="M53 42c2-6 8-7 11-3 4-1 8 2 6 7l-8 6c-5 0-9-5-9-10z" fill="#F2F0E4"/>
  <path d="M60 50c4-4 10-6 14-4l-6 6c-3 1-6 0-8-2z" fill="#5A5850"/>
</symbol>

<symbol id="city" viewBox="0 0 131 110" preserveAspectRatio="none">
  <rect width="131" height="110" fill="url(#gCity)"/>
  <g filter="url(#b2)"><path d="M35 26c20-4 45-4 70 0-25 5-50 5-70 0z" fill="#9A88B0" opacity="0.7"/></g>
  <rect width="131" height="3" fill="#050505"/>
  <path d="M0 40L25 36L60 36L95 38L131 40V102H0z" fill="#3E3448" opacity="0.8"/>
  <rect x="2.5" y="38.9" width="2.0" height="29.2" fill="#9A8AA0" opacity="0.75"/><rect x="27.3" y="48.1" width="2.8" height="11.4" fill="#6A5A78" opacity="0.75"/><rect x="41.4" y="44.5" width="2.9" height="39.9" fill="#7A6A88" opacity="0.75"/><rect x="47.1" y="51.9" width="1.8" height="19.4" fill="#9A8AA0" opacity="0.75"/><rect x="97.8" y="54.4" width="1.8" height="21.1" fill="#9A8AA0" opacity="0.75"/><rect x="93.2" y="46.4" width="2.2" height="9.9" fill="#7A6A88" opacity="0.75"/><rect x="112.1" y="56.0" width="3.3" height="36.7" fill="#8A7A98" opacity="0.75"/><rect x="38.0" y="43.8" width="2.8" height="16.1" fill="#6A5A78" opacity="0.75"/><rect x="98.9" y="48.4" width="1.7" height="12.4" fill="#9A8AA0" opacity="0.75"/><rect x="95.8" y="42.6" width="3.9" height="25.1" fill="#6A5A78" opacity="0.75"/><rect x="58.5" y="43.9" width="1.8" height="27.1" fill="#8A7A98" opacity="0.75"/><rect x="88.8" y="52.4" width="1.9" height="19.7" fill="#9A8AA0" opacity="0.75"/><rect x="77.6" y="36.3" width="2.1" height="11.3" fill="#7A6A88" opacity="0.75"/><rect x="56.8" y="54.1" width="2.4" height="34.0" fill="#5A4A68" opacity="0.75"/><rect x="18.2" y="39.3" width="1.9" height="29.5" fill="#9A8AA0" opacity="0.75"/><rect x="43.4" y="44.7" width="1.5" height="19.6" fill="#6A5A78" opacity="0.75"/><rect x="128.6" y="54.5" width="3.2" height="26.7" fill="#7A6A88" opacity="0.75"/><rect x="34.2" y="38.9" width="2.3" height="21.0" fill="#5A4A68" opacity="0.75"/><rect x="49.5" y="47.2" width="3.5" height="34.1" fill="#5A4A68" opacity="0.75"/><rect x="93.5" y="40.6" width="2.8" height="16.1" fill="#8A7A98" opacity="0.75"/><rect x="46.2" y="47.0" width="1.9" height="30.3" fill="#5A4A68" opacity="0.75"/><rect x="130.8" y="52.4" width="3.8" height="25.3" fill="#7A6A88" opacity="0.75"/><rect x="82.2" y="39.1" width="1.7" height="14.3" fill="#5A4A68" opacity="0.75"/><rect x="54.7" y="42.7" width="1.7" height="35.7" fill="#6A5A78" opacity="0.75"/><rect x="60.7" y="37.2" width="3.9" height="10.6" fill="#5A4A68" opacity="0.75"/><rect x="71.2" y="48.6" width="2.9" height="15.0" fill="#6A5A78" opacity="0.75"/><rect x="78.8" y="37.2" width="3.6" height="15.8" fill="#6A5A78" opacity="0.75"/><rect x="31.6" y="48.9" width="3.6" height="12.3" fill="#5A4A68" opacity="0.75"/><rect x="106.3" y="45.8" width="2.5" height="32.6" fill="#8A7A98" opacity="0.75"/><rect x="40.3" y="51.5" width="3.3" height="19.0" fill="#5A4A68" opacity="0.75"/><rect x="83.9" y="53.8" width="1.9" height="20.0" fill="#7A6A88" opacity="0.75"/><rect x="18.7" y="44.0" width="2.9" height="11.9" fill="#5A4A68" opacity="0.75"/><rect x="17.2" y="40.3" width="3.8" height="7.8" fill="#7A6A88" opacity="0.75"/><rect x="94.5" y="54.5" width="2.5" height="22.9" fill="#7A6A88" opacity="0.75"/><rect x="61.6" y="44.7" width="3.1" height="29.4" fill="#9A8AA0" opacity="0.75"/><rect x="98.5" y="46.6" width="4.0" height="34.5" fill="#9A8AA0" opacity="0.75"/><rect x="108.1" y="37.1" width="1.8" height="37.9" fill="#6A5A78" opacity="0.75"/><rect x="68.8" y="45.2" width="3.8" height="16.9" fill="#7A6A88" opacity="0.75"/><rect x="38.8" y="50.0" width="2.6" height="18.8" fill="#6A5A78" opacity="0.75"/><rect x="98.5" y="41.9" width="3.0" height="8.4" fill="#7A6A88" opacity="0.75"/><rect x="110.6" y="40.3" width="3.7" height="39.1" fill="#9A8AA0" opacity="0.75"/><rect x="91.0" y="47.7" width="2.1" height="16.4" fill="#9A8AA0" opacity="0.75"/><rect x="123.2" y="56.9" width="4.0" height="30.8" fill="#6A5A78" opacity="0.75"/><rect x="113.5" y="45.0" width="3.5" height="13.5" fill="#9A8AA0" opacity="0.75"/><rect x="74.3" y="57.5" width="1.7" height="32.9" fill="#7A6A88" opacity="0.75"/>
  <g filter="url(#b1)">
    <path d="M30 58C50 50 70 48 90 52C100 54 110 56 118 60" stroke="#F0A048" stroke-width="2.5" fill="none" opacity="0.75"/>
    <path d="M20 92C30 80 40 70 56 62" stroke="#E89848" stroke-width="2" fill="none" opacity="0.6"/>
    <path d="M64 72C70 80 76 88 80 100" stroke="#F0A048" stroke-width="2" fill="none" opacity="0.6"/>
  </g>
  <g filter="url(#b05)"><rect x="59.3" y="71.8" width="3.3" height="1.7" fill="#B8A8C8" opacity="0.88"/><rect x="24.9" y="87.4" width="2.2" height="1.9" fill="#E88848" opacity="0.50"/><rect x="39.7" y="41.8" width="3.0" height="2.0" fill="#F0A050" opacity="0.75"/><rect x="51.9" y="65.0" width="2.8" height="2.0" fill="#B8A8C8" opacity="0.46"/><rect x="69.2" y="39.8" width="1.5" height="1.4" fill="#F0A050" opacity="0.84"/><rect x="42.7" y="73.8" width="1.5" height="1.4" fill="#F8D090" opacity="0.70"/><rect x="36.4" y="99.8" width="3.5" height="2.3" fill="#8A7898" opacity="0.58"/><rect x="99.3" y="68.8" width="1.1" height="1.8" fill="#F0A050" opacity="0.65"/><rect x="110.9" y="60.7" width="3.4" height="2.3" fill="#F0A050" opacity="0.56"/><rect x="121.4" y="39.3" width="1.9" height="2.1" fill="#D87858" opacity="0.49"/><rect x="35.3" y="41.6" width="1.8" height="2.4" fill="#F0C070" opacity="0.91"/><rect x="17.6" y="81.2" width="1.0" height="1.7" fill="#D87858" opacity="0.54"/><rect x="73.3" y="64.6" width="1.5" height="2.1" fill="#E88848" opacity="0.66"/><rect x="50.3" y="61.3" width="3.5" height="1.0" fill="#F0C070" opacity="0.94"/><rect x="105.2" y="55.5" width="3.2" height="1.3" fill="#D87858" opacity="0.95"/><rect x="5.5" y="45.4" width="2.1" height="1.0" fill="#B8A8C8" opacity="0.61"/><rect x="38.8" y="40.7" width="1.2" height="1.9" fill="#E88848" opacity="0.46"/><rect x="48.3" y="75.8" width="1.3" height="1.9" fill="#F0C070" opacity="0.74"/><rect x="113.5" y="47.7" width="1.4" height="2.4" fill="#F0C070" opacity="0.76"/><rect x="95.0" y="46.1" width="2.6" height="1.8" fill="#8A7898" opacity="0.93"/><rect x="115.6" y="74.6" width="2.1" height="1.2" fill="#F0A050" opacity="0.71"/><rect x="33.4" y="83.3" width="2.0" height="1.6" fill="#B8A8C8" opacity="0.70"/><rect x="68.1" y="95.5" width="3.4" height="1.2" fill="#D87858" opacity="0.73"/><rect x="111.7" y="75.3" width="1.7" height="2.4" fill="#E88848" opacity="0.82"/><rect x="9.1" y="62.3" width="1.6" height="1.1" fill="#F8D090" opacity="0.63"/><rect x="75.0" y="44.4" width="1.9" height="2.3" fill="#F8D090" opacity="0.78"/><rect x="18.4" y="38.2" width="1.0" height="2.4" fill="#8A7898" opacity="0.61"/><rect x="4.4" y="74.3" width="1.2" height="1.1" fill="#F8D090" opacity="0.61"/><rect x="130.9" y="40.8" width="2.4" height="2.1" fill="#8A7898" opacity="0.82"/><rect x="17.0" y="97.7" width="1.9" height="1.1" fill="#D87858" opacity="0.90"/><rect x="114.1" y="62.7" width="3.0" height="2.3" fill="#B8A8C8" opacity="0.46"/><rect x="86.8" y="60.3" width="1.0" height="1.1" fill="#F0A050" opacity="0.77"/><rect x="130.1" y="92.3" width="2.8" height="1.6" fill="#8A7898" opacity="0.80"/><rect x="60.0" y="65.6" width="2.4" height="1.8" fill="#B8A8C8" opacity="0.46"/><rect x="30.2" y="80.7" width="2.2" height="1.9" fill="#D87858" opacity="0.58"/><rect x="1.5" y="55.3" width="2.7" height="1.3" fill="#E88848" opacity="0.83"/><rect x="44.9" y="95.5" width="2.2" height="1.4" fill="#D87858" opacity="0.78"/><rect x="26.0" y="63.6" width="3.0" height="2.4" fill="#E88848" opacity="0.64"/><rect x="76.4" y="56.3" width="1.3" height="1.7" fill="#F0C070" opacity="0.90"/><rect x="5.3" y="40.1" width="3.5" height="2.2" fill="#F0A050" opacity="0.68"/><rect x="36.0" y="49.7" width="2.0" height="1.9" fill="#D87858" opacity="0.79"/><rect x="81.8" y="56.5" width="3.1" height="1.4" fill="#B8A8C8" opacity="0.47"/><rect x="40.5" y="86.7" width="1.0" height="1.2" fill="#D87858" opacity="0.54"/><rect x="100.8" y="53.1" width="2.9" height="2.2" fill="#8A7898" opacity="0.51"/><rect x="14.3" y="70.3" width="2.6" height="1.6" fill="#F0A050" opacity="0.79"/><rect x="26.1" y="66.4" width="1.4" height="1.0" fill="#D87858" opacity="0.72"/><rect x="4.7" y="50.5" width="2.9" height="1.8" fill="#B8A8C8" opacity="0.70"/><rect x="130.6" y="46.2" width="3.1" height="2.0" fill="#E88848" opacity="0.49"/><rect x="122.2" y="82.2" width="1.3" height="1.7" fill="#8A7898" opacity="0.89"/><rect x="0.9" y="71.2" width="2.6" height="1.8" fill="#F0C070" opacity="0.92"/><rect x="60.7" y="77.7" width="1.5" height="2.1" fill="#F0C070" opacity="0.85"/><rect x="121.1" y="43.9" width="1.6" height="1.6" fill="#F0A050" opacity="0.94"/><rect x="70.3" y="86.6" width="1.8" height="2.4" fill="#F0C070" opacity="0.46"/><rect x="66.1" y="38.4" width="1.9" height="1.6" fill="#F8D090" opacity="0.69"/><rect x="3.7" y="87.8" width="1.2" height="2.2" fill="#E88848" opacity="0.72"/><rect x="61.6" y="100.0" width="3.3" height="1.8" fill="#8A7898" opacity="0.79"/><rect x="123.9" y="67.5" width="3.4" height="1.1" fill="#E88848" opacity="0.67"/><rect x="73.2" y="89.2" width="2.4" height="1.2" fill="#B8A8C8" opacity="0.87"/><rect x="73.4" y="55.9" width="2.0" height="2.3" fill="#B8A8C8" opacity="0.55"/><rect x="68.7" y="72.7" width="1.5" height="1.8" fill="#B8A8C8" opacity="0.45"/><rect x="49.4" y="70.5" width="1.1" height="2.4" fill="#B8A8C8" opacity="0.85"/><rect x="73.7" y="67.4" width="2.7" height="1.1" fill="#B8A8C8" opacity="0.68"/><rect x="120.6" y="87.2" width="2.0" height="1.4" fill="#D87858" opacity="0.51"/><rect x="56.8" y="88.2" width="3.3" height="1.7" fill="#F8D090" opacity="0.50"/><rect x="55.0" y="37.9" width="1.7" height="2.1" fill="#F0A050" opacity="0.47"/><rect x="20.4" y="36.8" width="1.7" height="2.1" fill="#E88848" opacity="0.76"/><rect x="13.7" y="82.8" width="1.3" height="1.8" fill="#F8D090" opacity="0.81"/><rect x="3.0" y="76.5" width="3.1" height="1.9" fill="#B8A8C8" opacity="0.55"/><rect x="69.4" y="90.5" width="2.5" height="2.3" fill="#E88848" opacity="0.91"/><rect x="82.3" y="58.2" width="1.5" height="1.9" fill="#E88848" opacity="0.56"/><rect x="130.8" y="92.8" width="1.3" height="1.4" fill="#8A7898" opacity="0.49"/><rect x="50.8" y="63.8" width="3.4" height="1.8" fill="#8A7898" opacity="0.51"/><rect x="52.8" y="79.9" width="1.0" height="1.3" fill="#8A7898" opacity="0.63"/><rect x="107.5" y="59.1" width="2.8" height="2.0" fill="#F8D090" opacity="0.70"/><rect x="89.8" y="48.1" width="1.2" height="1.2" fill="#F0A050" opacity="0.83"/><rect x="63.0" y="48.1" width="1.3" height="1.3" fill="#E88848" opacity="0.95"/><rect x="121.4" y="42.1" width="1.2" height="2.4" fill="#D87858" opacity="0.49"/><rect x="12.7" y="61.0" width="2.1" height="1.5" fill="#E88848" opacity="0.75"/><rect x="1.7" y="80.9" width="3.1" height="1.3" fill="#D87858" opacity="0.63"/><rect x="48.5" y="95.0" width="2.5" height="1.1" fill="#F0C070" opacity="0.46"/><rect x="117.0" y="87.3" width="2.8" height="2.3" fill="#8A7898" opacity="0.92"/><rect x="74.6" y="48.2" width="2.5" height="1.5" fill="#F0C070" opacity="0.58"/><rect x="119.4" y="83.6" width="2.9" height="2.2" fill="#D87858" opacity="0.52"/><rect x="43.2" y="70.5" width="1.9" height="1.6" fill="#E88848" opacity="0.65"/><rect x="94.7" y="40.5" width="1.9" height="1.7" fill="#F0A050" opacity="0.89"/><rect x="129.8" y="93.8" width="1.1" height="1.4" fill="#8A7898" opacity="0.60"/><rect x="28.3" y="62.0" width="1.5" height="1.1" fill="#B8A8C8" opacity="0.95"/><rect x="3.0" y="75.4" width="2.8" height="1.4" fill="#D87858" opacity="0.70"/><rect x="1.4" y="52.5" width="1.7" height="1.5" fill="#B8A8C8" opacity="0.70"/><rect x="126.7" y="72.4" width="3.5" height="2.0" fill="#F0C070" opacity="0.77"/><rect x="72.0" y="78.8" width="3.4" height="1.6" fill="#E88848" opacity="0.64"/><rect x="127.1" y="90.8" width="2.4" height="1.9" fill="#D87858" opacity="0.92"/><rect x="55.1" y="69.7" width="2.5" height="1.5" fill="#F8D090" opacity="0.69"/><rect x="35.3" y="95.5" width="2.7" height="2.1" fill="#F0A050" opacity="0.46"/><rect x="32.1" y="38.7" width="1.4" height="2.1" fill="#D87858" opacity="0.48"/><rect x="41.3" y="61.5" width="2.5" height="2.1" fill="#F8D090" opacity="0.49"/><rect x="118.6" y="63.5" width="2.2" height="2.5" fill="#E88848" opacity="0.47"/><rect x="12.9" y="87.9" width="3.3" height="1.2" fill="#F0C070" opacity="0.57"/><rect x="92.5" y="39.2" width="2.0" height="1.2" fill="#F0C070" opacity="0.48"/><rect x="69.2" y="44.0" width="2.1" height="2.0" fill="#D87858" opacity="0.75"/><rect x="47.7" y="83.6" width="3.0" height="1.2" fill="#F8D090" opacity="0.82"/><rect x="31.2" y="43.3" width="3.2" height="2.2" fill="#B8A8C8" opacity="0.87"/><rect x="36.0" y="75.0" width="2.8" height="2.0" fill="#E88848" opacity="0.77"/><rect x="98.7" y="48.1" width="1.6" height="2.5" fill="#E88848" opacity="0.89"/><rect x="5.2" y="39.9" width="1.7" height="1.6" fill="#B8A8C8" opacity="0.47"/><rect x="29.2" y="53.8" width="2.9" height="2.4" fill="#E88848" opacity="0.73"/><rect x="82.7" y="59.9" width="2.2" height="1.3" fill="#F8D090" opacity="0.70"/><rect x="17.5" y="91.7" width="3.0" height="1.7" fill="#F0C070" opacity="0.76"/><rect x="100.7" y="49.6" width="2.1" height="1.4" fill="#F0C070" opacity="0.53"/><rect x="20.1" y="89.5" width="2.5" height="1.4" fill="#F0C070" opacity="0.82"/><rect x="120.6" y="63.4" width="1.9" height="1.1" fill="#F8D090" opacity="0.49"/><rect x="10.9" y="72.1" width="2.2" height="2.0" fill="#F8D090" opacity="0.86"/><rect x="1.2" y="55.8" width="3.3" height="1.9" fill="#8A7898" opacity="0.60"/><rect x="37.1" y="45.1" width="1.9" height="2.1" fill="#F8D090" opacity="0.90"/><rect x="42.2" y="64.2" width="2.5" height="2.4" fill="#8A7898" opacity="0.91"/><rect x="57.4" y="87.4" width="1.8" height="1.5" fill="#D87858" opacity="0.93"/><rect x="95.6" y="69.0" width="1.2" height="2.2" fill="#F0A050" opacity="0.63"/><rect x="51.8" y="60.8" width="1.5" height="1.8" fill="#F0C070" opacity="0.65"/><rect x="20.3" y="73.8" width="1.4" height="1.1" fill="#D87858" opacity="0.89"/><rect x="36.9" y="37.4" width="2.3" height="1.8" fill="#B8A8C8" opacity="0.60"/><rect x="2.9" y="89.9" width="2.1" height="1.9" fill="#F8D090" opacity="0.84"/><rect x="11.0" y="41.2" width="2.8" height="2.3" fill="#F0A050" opacity="0.46"/><rect x="85.6" y="42.2" width="3.0" height="1.6" fill="#8A7898" opacity="0.56"/><rect x="100.3" y="69.4" width="2.9" height="1.6" fill="#F8D090" opacity="0.85"/><rect x="43.6" y="44.7" width="2.2" height="2.2" fill="#F0A050" opacity="0.80"/><rect x="119.9" y="62.3" width="3.1" height="2.0" fill="#F0C070" opacity="0.45"/><rect x="49.5" y="41.7" width="2.2" height="1.8" fill="#F0A050" opacity="0.71"/><rect x="55.2" y="62.9" width="1.4" height="2.1" fill="#8A7898" opacity="0.64"/><rect x="22.0" y="49.1" width="2.1" height="1.4" fill="#F0A050" opacity="0.69"/><rect x="95.7" y="55.4" width="1.4" height="2.4" fill="#F0A050" opacity="0.83"/><rect x="2.2" y="66.8" width="3.0" height="1.5" fill="#E88848" opacity="0.54"/><rect x="28.5" y="51.1" width="2.8" height="1.9" fill="#E88848" opacity="0.67"/><rect x="117.2" y="61.8" width="3.3" height="2.4" fill="#8A7898" opacity="0.72"/><rect x="107.0" y="66.7" width="1.7" height="2.3" fill="#F8D090" opacity="0.78"/><rect x="101.1" y="41.9" width="3.2" height="1.6" fill="#E88848" opacity="0.92"/><rect x="105.0" y="60.6" width="2.3" height="1.8" fill="#F8D090" opacity="0.84"/><rect x="7.6" y="95.2" width="3.2" height="2.3" fill="#F8D090" opacity="0.68"/><rect x="32.3" y="63.0" width="3.2" height="1.6" fill="#F0C070" opacity="0.61"/><rect x="34.0" y="91.6" width="2.3" height="2.0" fill="#B8A8C8" opacity="0.58"/><rect x="70.0" y="45.6" width="2.9" height="1.0" fill="#F0C070" opacity="0.91"/><rect x="19.5" y="44.2" width="1.9" height="1.9" fill="#B8A8C8" opacity="0.50"/><rect x="62.9" y="66.0" width="3.4" height="1.9" fill="#F0C070" opacity="0.70"/></g>
  <path d="M82 55C78 70 84 86 100 102H131V94C112 84 98 72 92 56z" fill="#4A4C66" filter="url(#b05)"/>
  <path d="M96 56C104 70 116 78 131 82V70C118 66 108 62 100 55z" fill="#4A5850" opacity="0.8" filter="url(#b05)"/>
  <rect x="56" y="54" width="8" height="32" fill="#9A6460"/>
  <rect x="58" y="80" width="5" height="20" fill="#D8D0D8"/>
  <rect x="66" y="88" width="8" height="14" fill="#C8C0CC"/>
  <rect x="47" y="86" width="5" height="16" fill="#B0A8B8"/>
  <rect y="102" width="131" height="8" fill="#050505"/>
</symbol>

<symbol id="chart" viewBox="0 0 135 114" preserveAspectRatio="none">
  <rect width="135" height="114" fill="#fff"/>
  <text x="68" y="15.5" text-anchor="middle" font-size="9.5" fill="#7A7A7A" font-family="Liberation Sans">图表标题</text>
  <g stroke="#E6E6E6" stroke-width="0.8"><path d="M2 27.5h131M2 40.5h131M2 54h131M2 67h131"/></g>
  <path d="M2 80.5h131" stroke="#D6D6D6" stroke-width="0.8"/>
  <g fill="#4472C4"><rect x="2" y="41" width="7" height="39.5"/><rect x="39" y="36" width="8" height="44.5"/><rect x="78" y="42" width="8" height="38.5"/><rect x="116" y="46" width="8" height="34.5"/></g>
  <g fill="#FFC000"><rect x="28" y="67" width="8.5" height="13.5"/><rect x="66.5" y="60" width="8.5" height="20.5"/><rect x="105" y="65" width="8.5" height="15.5"/></g>
  <g font-size="5.5" fill="#999" font-family="Liberation Sans"><text x="-2" y="91">王</text><text x="32" y="91">小杨</text><text x="71" y="91">小王</text><text x="109" y="91">小赵</text>
  <text x="31" y="105">11月销售额</text><text x="75" y="105">当前总销售额</text></g>
  <rect x="26" y="100" width="3" height="3" fill="#FFC000"/><rect x="69.5" y="100" width="3" height="3" fill="#4472C4"/>
</symbol>

<symbol id="doctor" viewBox="0 0 131 110" preserveAspectRatio="none">
  <rect width="131" height="110" fill="url(#gDoc)"/>
  <g filter="url(#b1)">
    <path d="M0 64C10 60 24 58 40 56L62 62L84 56C100 58 116 62 131 66V110H0z" fill="url(#gCoat)"/>
    <path d="M0 76C6 80 12 90 14 110H0z" fill="#C8B8A8" opacity="0.7"/>
    <path d="M118 70C124 76 128 90 131 100V70z" fill="#C0C8D8" opacity="0.6"/>
  </g>
  <g filter="url(#b05)">
  <path d="M46 54L62 66L78 54L82 62L64 100L46 62z" fill="#D8D8E6"/>
  <path d="M58 64h8l2 6-5 30-5-30z" fill="#2A2C3A"/>
  <ellipse cx="62" cy="38" rx="24" ry="24" fill="#6E5446"/>
  <ellipse cx="36" cy="38" rx="4" ry="7" fill="#7A5E4E"/><ellipse cx="89" cy="38" rx="4" ry="7" fill="#7A5E4E"/>
  <path d="M32 20C30 -6 94 -6 92 20C88 24 84 24 80 23H44C40 24 36 24 32 20z" fill="#5CC0E0"/>
  <rect x="38" y="23" width="48" height="9" rx="4" fill="#C8C4BC" opacity="0.75"/>
  <ellipse cx="48" cy="27" rx="3" ry="2" fill="#F4F4F0" opacity="0.9"/><ellipse cx="76" cy="27" rx="3" ry="2" fill="#F4F4F0" opacity="0.9"/>
  <path d="M42 32C50 29 74 29 82 32L81 50C74 58 50 58 43 50z" fill="#E4E8F0"/>
  </g>
  <rect x="104" y="3" width="11" height="50" fill="#F6DE1E"/>
  <path d="M101.5 3h6.5v32l-3.2-3.5-3.3 3.5z" fill="#E65038"/>
  <g stroke="#E8E8F0" stroke-width="0.6" opacity="0.6"><path d="M20 59h90M20 80h90"/></g>
  <rect x="0" y="59" width="131" height="21" fill="#fff" opacity="0.08"/>
  <g stroke="#3CD4E0" stroke-width="1.3" fill="none" opacity="0.85"><path d="M26 78c4-10 8-12 10-6s6 4 8-2M46 80c6-6 10-14 14-8M64 74c6 4 12-4 16-8M86 82c6-8 10-12 14-14"/></g>
  <rect x="112" y="60" width="19" height="14" fill="#C8D070" opacity="0.35"/>
</symbol>

<symbol id="word" viewBox="0 0 131 110" preserveAspectRatio="none">
  <rect width="131" height="110" fill="#2D5596"/>
  <path d="M70.4 33.4h23.1v42.3H70.4z" fill="#fff"/>
  <g stroke="#2D5596" stroke-width="2.2"><path d="M74 39.5h17M74 45.5h17M74 51.5h17M74 57.5h17M74 63.5h17M74 69.5h17"/></g>
  <path d="M36 33L69 28V83L36 78z" fill="#fff"/>
  <text x="39.5" y="64" font-family="Liberation Sans" font-weight="bold" font-size="23" fill="#2D5596">W</text>
</symbol>

<symbol id="beach" viewBox="0 0 131 110" preserveAspectRatio="none">
  <rect width="131" height="57" fill="url(#gBeachSky)"/>
  <g fill="#fff" filter="url(#b1)">
    <ellipse cx="12" cy="14" rx="14" ry="9"/><ellipse cx="30" cy="24" rx="12" ry="8" opacity="0.9"/><ellipse cx="45" cy="24" rx="12" ry="7"/><ellipse cx="58" cy="31" rx="11" ry="6"/>
    <ellipse cx="32" cy="36" rx="16" ry="6" opacity="0.9"/><ellipse cx="8" cy="40" rx="10" ry="8"/><ellipse cx="5" cy="26" rx="6" ry="8" opacity="0.9"/>
    <ellipse cx="82" cy="34" rx="6" ry="4" opacity="0.7"/><ellipse cx="115" cy="12" rx="12" ry="4" opacity="0.5"/><ellipse cx="100" cy="28" rx="16" ry="3" opacity="0.5"/>
    <ellipse cx="36" cy="10" rx="4" ry="3" opacity="0.8"/>
  </g>
  <rect y="53.5" width="131" height="3.5" fill="#8A8880"/>
  <path d="M33 53L43 47H55L61 53z" fill="#6E5E4C"/><rect x="34" y="53" width="27" height="7" fill="#A8CCCC"/><rect x="22" y="54" width="12" height="6" fill="#3A3428"/>
  <g fill="#2E5A2E"><path d="M106 40l4 16h2l-3-16z"/><path d="M116 38l2 18h2l-1-18z"/><path d="M124 36l1 20h2v-20z"/></g>
  <g fill="#3E7A3A" filter="url(#b05)"><ellipse cx="108" cy="39" rx="4" ry="2"/><ellipse cx="118" cy="37" rx="5" ry="2"/><ellipse cx="126" cy="35" rx="5" ry="2.5"/><rect x="98" y="53" width="33" height="4"/></g>
  <rect y="57" width="131" height="53" fill="url(#gBeachSea)"/>
</symbol>

<symbol id="office" viewBox="0 0 131 110" preserveAspectRatio="none">
  <rect width="131" height="110" fill="#0EA6E1"/>
  <path d="M65.9 37.5L76.2 40.5V63.5L65.9 68z" fill="url(#gOffR)"/>
  <path d="M49 44L62.6 36.4L65.9 37.5V43L55 48.5V62.5L49 60z" fill="url(#gOffL)"/>
  <path d="M54.2 64.7L65.9 63V68L62.7 71z" fill="#D82040"/>
</symbol>

<symbol id="silk" viewBox="0 0 131 110" preserveAspectRatio="none">
  <rect width="131" height="110" fill="#D81820"/>
  <g filter="url(#b2)">
    <path d="M0 0H60C80 10 110 20 131 24V34C100 34 60 28 20 14L0 8z" fill="#7A0006"/>
    <path d="M0 18C30 30 60 42 131 40V50C90 58 50 50 0 30z" fill="#8A0008" opacity="0.9"/>
    <path d="M20 50C50 62 90 72 131 64V86C90 90 50 80 20 62z" fill="#7A0006" opacity="0.85"/>
    <path d="M0 70C30 86 60 96 131 96V110H0z" fill="#B00C14" opacity="0.6"/>
    <path d="M60 0H131V20C110 14 90 8 60 0z" fill="#F02830"/>
    <path d="M0 36C40 56 80 60 131 56V62C80 68 40 60 0 46z" fill="#F03038" opacity="0.7"/>
  </g>
  <g fill="none" stroke="#FF4A50" stroke-width="1.2" opacity="0.9">
    <path d="M0 3C30 18 60 32 131 38"/><path d="M0 6C30 22 60 36 131 35"/>
  </g>
</symbol>
<symbol id="slide10" viewBox="0 0 1140 641">
<rect x="222" y="116" width="135" height="114" fill="#fff"/><use href="#fuji" x="224" y="118" width="131" height="110"/>
<rect x="428" y="116" width="135" height="114" fill="#fff"/><use href="#autumn" x="430" y="118" width="131" height="110"/>
<rect x="633" y="116" width="135" height="114" fill="#fff"/><use href="#leaf" x="635" y="118" width="131" height="110"/>
<rect x="839" y="116" width="135" height="114" fill="#fff"/><use href="#city" x="841" y="118" width="131" height="110"/>
<use href="#chart" x="222" y="255" width="135" height="114"/>
<rect x="428" y="255" width="135" height="114" fill="#fff"/><use href="#doctor" x="430" y="257" width="131" height="110"/>
<rect x="633" y="255" width="135" height="114" fill="#fff"/><use href="#word" x="635" y="257" width="131" height="110"/>
<rect x="839" y="255" width="135" height="114" fill="#fff"/><use href="#beach" x="841" y="257" width="131" height="110"/>
<rect x="428" y="394" width="135" height="114" fill="#fff"/><use href="#office" x="430" y="396" width="131" height="110"/>
<rect x="633" y="394" width="135" height="114" fill="#fff"/><use href="#silk" x="635" y="396" width="131" height="110"/>
<rect x="173" y="212" width="69" height="25" fill="#fff"/><rect x="175" y="214" width="65" height="21" fill="#EC7F0E"/>
<rect x="379" y="212" width="69" height="25" fill="#fff"/><rect x="381" y="214" width="65" height="21" fill="#EC7F0E"/>
<rect x="584" y="212" width="69" height="25" fill="#fff"/><rect x="586" y="214" width="65" height="21" fill="#EC7F0E"/>
<rect x="790" y="212" width="69" height="25" fill="#fff"/><rect x="792" y="214" width="65" height="21" fill="#EC7F0E"/>
<rect x="173" y="351" width="69" height="25" fill="#fff"/><rect x="175" y="353" width="65" height="21" fill="#EC7F0E"/>
<rect x="379" y="351" width="69" height="25" fill="#fff"/><rect x="381" y="353" width="65" height="21" fill="#EC7F0E"/>
<rect x="584" y="351" width="69" height="25" fill="#fff"/><rect x="586" y="353" width="65" height="21" fill="#EC7F0E"/>
<rect x="790" y="351" width="69" height="25" fill="#fff"/><rect x="792" y="353" width="65" height="21" fill="#EC7F0E"/>
<rect x="379" y="490" width="69" height="25" fill="#fff"/><rect x="381" y="492" width="65" height="21" fill="#EC7F0E"/>
<rect x="584" y="490" width="69" height="25" fill="#fff"/><rect x="586" y="492" width="65" height="21" fill="#EC7F0E"/>
<text x="185" y="230" font-size="16.8" fill="#fff" font-family="Liberation Sans">XX <tspan font-size="19" dx="-1" dy="0.5">摄</tspan></text>
</symbol>
</defs>
</svg>


<div class="a" style="left:320px;top:272px;width:1140px;height:641px;background:#002060"></div>
<svg class="a" style="left:320px;top:272px" width="1140" height="641"><use href="#slide10" x="0" y="0" width="1140" height="641"/></svg>


<svg class="a" style="left:0;top:0" width="1493" height="1015" viewBox="0 0 1493 1015"><g font-family="Liberation Sans" font-size="12.5" fill="#444" stroke-width="1"><path d="M331.5 198.5v4.5" stroke="#333"/><path d="M342.5 200.5v1.5" stroke="#888"/><text x="352.1" y="205" text-anchor="middle">12</text><path d="M365.5 200.5v1.5" stroke="#888"/><path d="M376.5 198.5v4.5" stroke="#333"/><path d="M387.5 200.5v1.5" stroke="#888"/><text x="396.9" y="205" text-anchor="middle">11</text><path d="M409.5 200.5v1.5" stroke="#888"/><path d="M421.5 198.5v4.5" stroke="#333"/><path d="M432.5 200.5v1.5" stroke="#888"/><text x="441.8" y="205" text-anchor="middle">10</text><path d="M454.5 200.5v1.5" stroke="#888"/><path d="M466.5 198.5v4.5" stroke="#333"/><path d="M477.5 200.5v1.5" stroke="#888"/><text x="486.6" y="205" text-anchor="middle">9</text><path d="M499.5 200.5v1.5" stroke="#888"/><path d="M510.5 198.5v4.5" stroke="#333"/><path d="M522.5 200.5v1.5" stroke="#888"/><text x="531.5" y="205" text-anchor="middle">8</text><path d="M544.5 200.5v1.5" stroke="#888"/><path d="M555.5 198.5v4.5" stroke="#333"/><path d="M566.5 200.5v1.5" stroke="#888"/><text x="576.3" y="205" text-anchor="middle">7</text><path d="M589.5 200.5v1.5" stroke="#888"/><path d="M600.5 198.5v4.5" stroke="#333"/><path d="M611.5 200.5v1.5" stroke="#888"/><text x="621.2" y="205" text-anchor="middle">6</text><path d="M634.5 200.5v1.5" stroke="#888"/><path d="M645.5 198.5v4.5" stroke="#333"/><path d="M656.5 200.5v1.5" stroke="#888"/><text x="666.0" y="205" text-anchor="middle">5</text><path d="M679.5 200.5v1.5" stroke="#888"/><path d="M690.5 198.5v4.5" stroke="#333"/><path d="M701.5 200.5v1.5" stroke="#888"/><text x="710.9" y="205" text-anchor="middle">4</text><path d="M723.5 200.5v1.5" stroke="#888"/><path d="M735.5 198.5v4.5" stroke="#333"/><path d="M746.5 200.5v1.5" stroke="#888"/><text x="755.8" y="205" text-anchor="middle">3</text><path d="M768.5 200.5v1.5" stroke="#888"/><path d="M779.5 198.5v4.5" stroke="#333"/><path d="M791.5 200.5v1.5" stroke="#888"/><text x="800.6" y="205" text-anchor="middle">2</text><path d="M813.5 200.5v1.5" stroke="#888"/><path d="M824.5 198.5v4.5" stroke="#333"/><path d="M836.5 200.5v1.5" stroke="#888"/><text x="845.4" y="205" text-anchor="middle">1</text><path d="M858.5 200.5v1.5" stroke="#888"/><path d="M869.5 198.5v4.5" stroke="#333"/><path d="M880.5 200.5v1.5" stroke="#888"/><text x="890.3" y="205" text-anchor="middle">0</text><path d="M903.5 200.5v1.5" stroke="#888"/><path d="M914.5 198.5v4.5" stroke="#333"/><path d="M925.5 200.5v1.5" stroke="#888"/><text x="935.1" y="205" text-anchor="middle">1</text><path d="M948.5 200.5v1.5" stroke="#888"/><path d="M959.5 198.5v4.5" stroke="#333"/><path d="M970.5 200.5v1.5" stroke="#888"/><text x="980.0" y="205" text-anchor="middle">2</text><path d="M993.5 200.5v1.5" stroke="#888"/><path d="M1004.5 198.5v4.5" stroke="#333"/><path d="M1015.5 200.5v1.5" stroke="#888"/><text x="1024.8" y="205" text-anchor="middle">3</text><path d="M1037.5 200.5v1.5" stroke="#888"/><path d="M1049.5 198.5v4.5" stroke="#333"/><path d="M1060.5 200.5v1.5" stroke="#888"/><text x="1069.7" y="205" text-anchor="middle">4</text><path d="M1082.5 200.5v1.5" stroke="#888"/><path d="M1093.5 198.5v4.5" stroke="#333"/><path d="M1105.5 200.5v1.5" stroke="#888"/><text x="1114.5" y="205" text-anchor="middle">5</text><path d="M1127.5 200.5v1.5" stroke="#888"/><path d="M1138.5 198.5v4.5" stroke="#333"/><path d="M1149.5 200.5v1.5" stroke="#888"/><text x="1159.4" y="205" text-anchor="middle">6</text><path d="M1172.5 200.5v1.5" stroke="#888"/><path d="M1183.5 198.5v4.5" stroke="#333"/><path d="M1194.5 200.5v1.5" stroke="#888"/><text x="1204.2" y="205" text-anchor="middle">7</text><path d="M1217.5 200.5v1.5" stroke="#888"/><path d="M1228.5 198.5v4.5" stroke="#333"/><path d="M1239.5 200.5v1.5" stroke="#888"/><text x="1249.1" y="205" text-anchor="middle">8</text><path d="M1262.5 200.5v1.5" stroke="#888"/><path d="M1273.5 198.5v4.5" stroke="#333"/><path d="M1284.5 200.5v1.5" stroke="#888"/><text x="1294.0" y="205" text-anchor="middle">9</text><path d="M1306.5 200.5v1.5" stroke="#888"/><path d="M1318.5 198.5v4.5" stroke="#333"/><path d="M1329.5 200.5v1.5" stroke="#888"/><text x="1338.8" y="205" text-anchor="middle">10</text><path d="M1351.5 200.5v1.5" stroke="#888"/><path d="M1363.5 198.5v4.5" stroke="#333"/><path d="M1374.5 200.5v1.5" stroke="#888"/><text x="1383.7" y="205" text-anchor="middle">11</text><path d="M1396.5 200.5v1.5" stroke="#888"/><path d="M1407.5 198.5v4.5" stroke="#333"/><path d="M1419.5 200.5v1.5" stroke="#888"/><text x="1428.5" y="205" text-anchor="middle">12</text><path d="M1441.5 200.5v1.5" stroke="#888"/><path d="M1452.5 198.5v4.5" stroke="#333"/><text transform="translate(288.5 278.6) rotate(-90)" text-anchor="middle">7</text><path d="M284 290.5h1.5" stroke="#888"/><path d="M282.5 301.5h4.5" stroke="#333"/><path d="M284 312.5h1.5" stroke="#888"/><text transform="translate(288.5 323.4) rotate(-90)" text-anchor="middle">6</text><path d="M284 335.5h1.5" stroke="#888"/><path d="M282.5 346.5h4.5" stroke="#333"/><path d="M284 357.5h1.5" stroke="#888"/><text transform="translate(288.5 368.2) rotate(-90)" text-anchor="middle">5</text><path d="M284 379.5h1.5" stroke="#888"/><path d="M282.5 391.5h4.5" stroke="#333"/><path d="M284 402.5h1.5" stroke="#888"/><text transform="translate(288.5 413.1) rotate(-90)" text-anchor="middle">4</text><path d="M284 424.5h1.5" stroke="#888"/><path d="M282.5 436.5h4.5" stroke="#333"/><path d="M284 447.5h1.5" stroke="#888"/><text transform="translate(288.5 457.9) rotate(-90)" text-anchor="middle">3</text><path d="M284 469.5h1.5" stroke="#888"/><path d="M282.5 480.5h4.5" stroke="#333"/><path d="M284 492.5h1.5" stroke="#888"/><text transform="translate(288.5 502.8) rotate(-90)" text-anchor="middle">2</text><path d="M284 514.5h1.5" stroke="#888"/><path d="M282.5 525.5h4.5" stroke="#333"/><path d="M284 536.5h1.5" stroke="#888"/><text transform="translate(288.5 547.6) rotate(-90)" text-anchor="middle">1</text><path d="M284 559.5h1.5" stroke="#888"/><path d="M282.5 570.5h4.5" stroke="#333"/><path d="M284 581.5h1.5" stroke="#888"/><text transform="translate(288.5 592.5) rotate(-90)" text-anchor="middle">0</text><path d="M284 604.5h1.5" stroke="#888"/><path d="M282.5 615.5h4.5" stroke="#333"/><path d="M284 626.5h1.5" stroke="#888"/><text transform="translate(288.5 637.4) rotate(-90)" text-anchor="middle">1</text><path d="M284 649.5h1.5" stroke="#888"/><path d="M282.5 660.5h4.5" stroke="#333"/><path d="M284 671.5h1.5" stroke="#888"/><text transform="translate(288.5 682.2) rotate(-90)" text-anchor="middle">2</text><path d="M284 693.5h1.5" stroke="#888"/><path d="M282.5 705.5h4.5" stroke="#333"/><path d="M284 716.5h1.5" stroke="#888"/><text transform="translate(288.5 727.0) rotate(-90)" text-anchor="middle">3</text><path d="M284 738.5h1.5" stroke="#888"/><path d="M282.5 749.5h4.5" stroke="#333"/><path d="M284 761.5h1.5" stroke="#888"/><text transform="translate(288.5 771.9) rotate(-90)" text-anchor="middle">4</text><path d="M284 783.5h1.5" stroke="#888"/><path d="M282.5 794.5h4.5" stroke="#333"/><path d="M284 806.5h1.5" stroke="#888"/><text transform="translate(288.5 816.8) rotate(-90)" text-anchor="middle">5</text><path d="M284 828.5h1.5" stroke="#888"/><path d="M282.5 839.5h4.5" stroke="#333"/><path d="M284 850.5h1.5" stroke="#888"/><text transform="translate(288.5 861.6) rotate(-90)" text-anchor="middle">6</text><path d="M284 873.5h1.5" stroke="#888"/><path d="M282.5 884.5h4.5" stroke="#333"/><path d="M284 895.5h1.5" stroke="#888"/><text transform="translate(288.5 906.5) rotate(-90)" text-anchor="middle">7</text></g></svg>
<!-- guides -->
<svg class="a" style="left:0;top:0" width="1493" height="1015" viewBox="0 0 1493 1015">
<g stroke-width="1" stroke-dasharray="3 3" fill="none">
  <path d="M679.5 217V272M679.5 913V964M1159.5 217V272M1159.5 913V964" stroke="#9A9A9A"/>
  <path d="M679.5 272V913M1159.5 272V913" stroke="#C8CCD8"/>
  <path d="M890.5 217V964" stroke="#E8704A"/>
  <path d="M301 593.5H320M1460 593.5H1479" stroke="#9A9A9A" stroke-width="1.2"/>
  <path d="M320 593.5H1460" stroke="#D0D4DC" stroke-width="1.2"/>
  <path d="M542 593.5H677" stroke="#8A8A8A" stroke-width="1.2"/>
</g>
</svg>

<!-- context menu -->
<div class="a" style="left:680px;top:320px;width:159px;height:156px;background:#fff;border:1px solid #CFCFCF;box-shadow:1px 2px 4px rgba(0,0,0,0.35)"></div>
<div class="a" style="left:682px;top:397px;width:155px;height:25px;background:#C6C6C6"></div>
<div class="t" style="left:713px;top:327px;color:#444">添加垂直参考线(<u>V</u>)</div>
<div class="t" style="left:713px;top:351px;color:#444">添加水平参考线(<u>H</u>)</div>
<div class="t" style="left:713px;top:376px;color:#444">颜色(<u>C</u>)</div>
<div class="t" style="left:713px;top:401px;color:#444">删除(<u>D</u>)</div>
<div class="t" style="left:713px;top:428px;color:#444">网格和参考线(<u>I</u>)...</div>
<div class="t" style="left:713px;top:453px;color:#444">标尺(<u>R</u>)</div>
<svg class="a" style="left:0;top:0" width="1493" height="1015" viewBox="0 0 1493 1015">
  <g fill="none" stroke="#666" stroke-width="1">
    <rect x="686.5" y="327.5" width="14" height="12"/>
    <rect x="686.5" y="352.5" width="14" height="12"/>
    <path d="M697 377.5h-10.5v10"/>
  </g>
  <path d="M693.5 328v11M687 358.5h13" stroke="#3D7BC5" stroke-width="1"/>
  <path d="M691 387l1-3.5 7.5-7.5 2.5 2.5-7.5 7.5z" fill="#3D7BC5"/>
  <rect x="686" y="388.5" width="15" height="3" fill="#A6A6A6"/>
  <path d="M814.5 378v13" stroke="#E0E0E0"/>
  <path d="M824 380v8l4.5-4z" fill="#666"/>
  <path d="M687.5 403l13 13M700.5 403l-13 13" stroke="#5A5A5A" stroke-width="2"/>
  <g stroke="#3D7BC5" stroke-width="1.2"><path d="M690 429.5v13.5M694 429.5v13.5M698 429.5v13.5M687 432.5h14M687 436.5h14M687 440.5h14"/></g>
  <path d="M690.5 461.5l3 3 5.5-6.5" fill="none" stroke="#666" stroke-width="1.5"/>
  <!-- cursor -->
  <path d="M780.5 413.5v17l4-4 3 7 2.5-1-3-7h5.5z" fill="#fff" stroke="#000" stroke-width="1" stroke-linejoin="round"/>
  <!-- red arrow -->
  <g filter="url(#shd)">
  <path d="M611.8 303.8L678 389" stroke="#FF0000" stroke-width="3.6" stroke-linecap="round"/>
  <path d="M687.3 400.7L666.8 384.6L676.8 377.2z" fill="#FF0000"/>
  </g>
  <defs><filter id="shd" x="-20%" y="-20%" width="140%" height="140%"><feDropShadow dx="1.5" dy="1.5" stdDeviation="1.2" flood-color="#000" flood-opacity="0.5"/></filter></defs>
</svg>

<!-- notes -->
<div class="a" style="left:274px;top:970px;width:1219px;height:1px;background:#C6C6C6"></div>
<div class="t" style="left:283px;top:978px;font-size:14.7px;line-height:17px;color:#555">单击此处添加备注</div>

<!-- right scrollbar -->
<div class="a" style="left:1480px;top:192px;width:13px;height:722px;background:#DADADA"></div>
<div class="a" style="left:1480px;top:192px;width:14px;height:15px;background:#fff;border:1px solid #ABABAB"></div>
<div class="a" style="left:1480px;top:726px;width:14px;height:58px;background:#fff;border:1px solid #ABABAB"></div>
<div class="a" style="left:1480px;top:899px;width:14px;height:15px;background:#fff;border:1px solid #ABABAB"></div>

<!-- scroll arrows -->
<svg class="a" style="left:0;top:0" width="1493" height="1015" viewBox="0 0 1493 1015">
  <g fill="#777">
    <path d="M255.5 202.5l4-4 4 4z"/><path d="M255.5 1005.5l4 4 4-4z"/>
    <path d="M1482.5 202.5l4-4 4 4z"/><path d="M1482.5 905l4 4 4-4z"/>
    <path d="M1482.5 922l4-4 4 4zM1482.5 926l4-4 4 4z"/>
    <path d="M1482.5 937l4 4 4-4zM1482.5 941l4 4 4-4z"/>
  </g>
</svg>
<!-- watermark -->
<svg class="a" style="left:0;top:0" width="1493" height="1015" viewBox="0 0 1493 1015">
  <defs>
    <linearGradient id="wmB" x1="1" y1="0" x2="0" y2="1"><stop offset="0" stop-color="#5CC4F0"/><stop offset="1" stop-color="#4A7ED0"/></linearGradient>
    <linearGradient id="wmGr" x1="1" y1="0" x2="0" y2="1"><stop offset="0" stop-color="#5CC080"/><stop offset="0.6" stop-color="#80CC70"/><stop offset="1" stop-color="#E8F040"/></linearGradient>
  </defs>
  <path d="M1378 965.5C1356 966 1336 978 1334 989C1333 994 1337 997 1343 997C1338 990 1346 977 1378 965.5z" fill="url(#wmB)"/>
  <path d="M1366 975C1352 977 1342 984 1344 990C1346 994 1352 994 1357 990C1351 990 1350 983 1366 975z" fill="#5A92D8"/>
  <path d="M1375 981C1360 979 1347 985 1350 990C1358 986 1367 984 1371 985C1368 993 1354 1000 1337 1004C1356 1005 1380 996 1375 981z" fill="url(#wmGr)"/>
</svg>
<div class="t" style="left:1377px;top:965px;font-size:21px;line-height:24px;font-weight:bold;color:#5A9BD8;letter-spacing:0px">极光下载站</div>
<div class="t" style="left:1378px;top:989px;font-size:16.5px;line-height:18px;color:#5CBF6C;letter-spacing:0.1px">www.xz7.com</div>

</body></html>
